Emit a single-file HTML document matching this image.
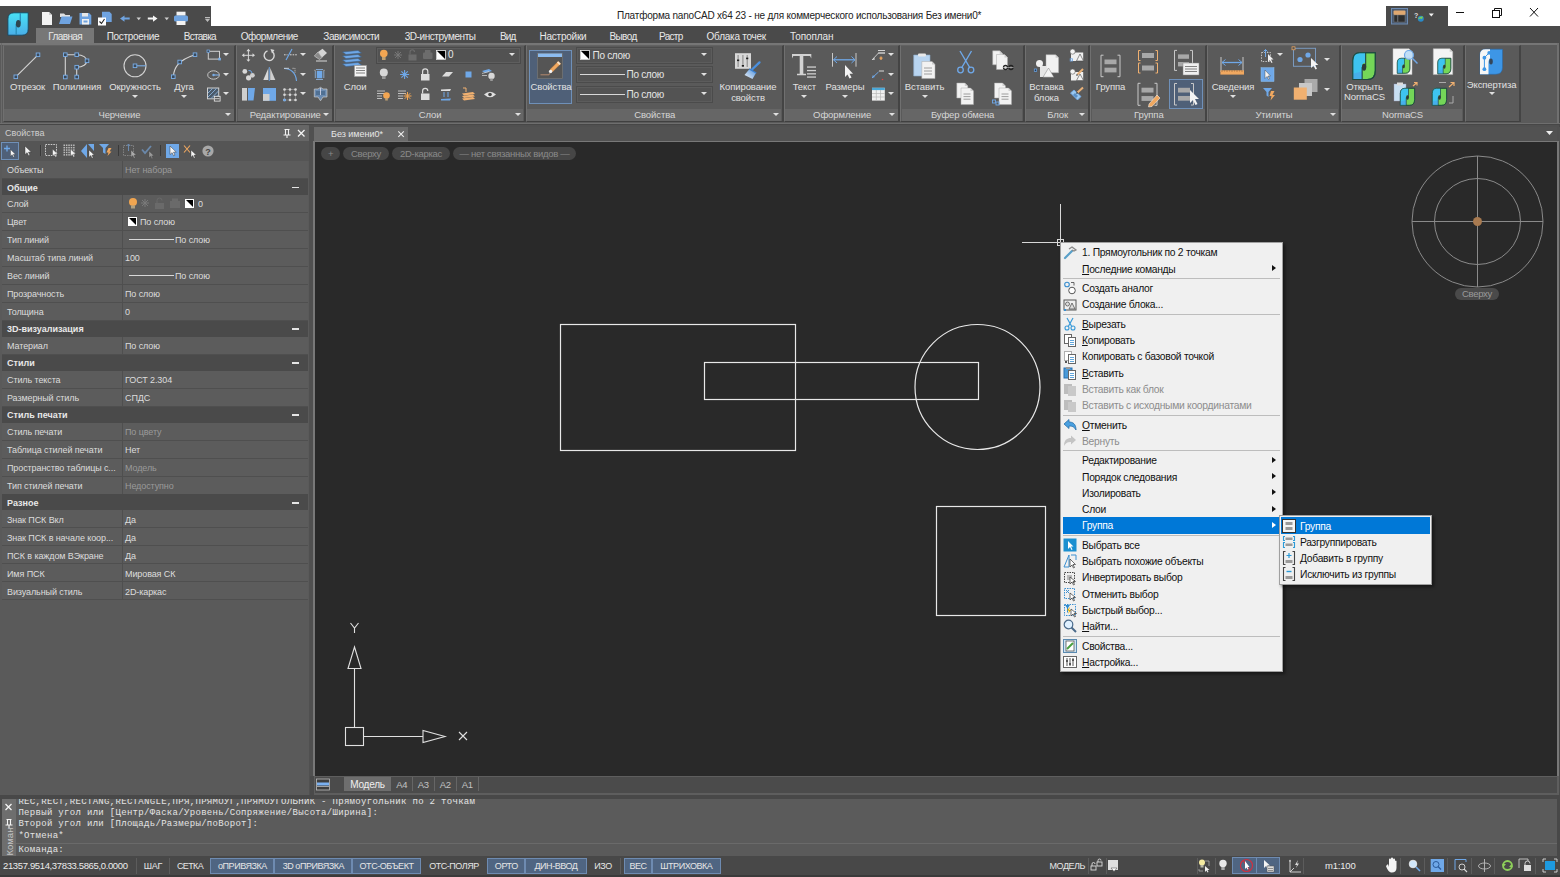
<!DOCTYPE html>
<html><head><meta charset="utf-8">
<style>
*{margin:0;padding:0;box-sizing:border-box}
html,body{width:1560px;height:877px;overflow:hidden;background:#474747;font-family:"Liberation Sans",sans-serif;color:#e6e6e6}
.a,div.a{position:absolute}
.t{position:absolute;white-space:nowrap}
svg{position:absolute;overflow:visible}
/* title */
#title{left:0;top:0;width:1560px;height:26px;background:#fff}
#tabbar{left:0;top:26px;width:1560px;height:17px;background:#4a4a4a}
.tab{position:absolute;top:26.5px;height:17px;font-size:10px;letter-spacing:-0.15px;color:#e8e8e8;line-height:17px;padding-top:1px}
/* ribbon */
#ribbon{left:0;top:43px;width:1560px;height:81px;background:#4c4c4c;border-top:1px solid #6a6a6a;border-bottom:1px solid #6a6a6a}
.pnl{position:absolute;top:44px;height:78px;background:#575757;border:1px solid #3d3d3d;box-shadow:inset 1px 1px 0 #656565}
.pt{position:absolute;left:1px;right:1px;bottom:1px;height:12px;background:#606060;font-size:9.5px;letter-spacing:-0.1px;text-align:center;line-height:12px;color:#d0d0d0}
.pt i{position:absolute;right:3px;top:4px;width:0;height:0;border-left:3.5px solid transparent;border-right:3.5px solid transparent;border-top:4px solid #e0e0e0}
.rl{position:absolute;font-size:9.5px;letter-spacing:-0.1px;color:#e2e2e2;white-space:nowrap;text-align:center;line-height:11px}
.dd{position:absolute;width:0;height:0;border-left:3px solid transparent;border-right:3px solid transparent;border-top:3.5px solid #e0e0e0}
/* props */
#props{left:0;top:125px;width:310px;height:670px;background:#5a5a5a}
.row{position:absolute;left:2px;width:306px;height:18px;background:#5c5c5c;border-bottom:1px solid #4f4f4f;font-size:9px;letter-spacing:-0.1px;color:#dcdcdc;line-height:17px}
.row .k{position:absolute;left:5px;top:1.3px}
.row .v{position:absolute;left:123px;top:1.3px}
.row .sep{position:absolute;left:120px;top:0;width:1px;height:18px;background:#4f4f4f}
.row.dis .v{color:#9a9a9a}
.hdr{position:absolute;left:2px;width:306px;height:16px;background:#4a4a4a;font-size:9px;font-weight:bold;color:#e8e8e8;line-height:16px}
.hdr .k{position:absolute;left:5px;top:0.5px}
.hdr .m{position:absolute;right:8.7px;top:7.6px;width:7.5px;height:1.5px;background:#e4e4e4}
/* viewport */
#vp{left:315px;top:142px;width:1242px;height:634px;background:#292929}
.pill{position:absolute;top:147px;height:12.5px;border-radius:6.5px;background:#464646;color:#8a8a8a;font-size:9.5px;line-height:13px;text-align:center;letter-spacing:-0.3px}
/* menu */
.menu{position:absolute;background:#f0f0f0;border:1px solid #a0a0a0;box-shadow:2px 2px 3px rgba(0,0,0,.45)}
.mi{position:absolute;left:0;height:16px;font-size:10.3px;letter-spacing:-0.27px;color:#111;line-height:18.5px;white-space:nowrap}
.mi.dis{color:#8d8d8d}
.msep{position:absolute;left:2px;right:2px;height:1px;background:#bdbdbd}
.arr{position:absolute;width:0;height:0;border-top:3.5px solid transparent;border-bottom:3.5px solid transparent;border-left:4px solid #111}
/* cmd */
#cmd{left:0;top:797px;width:1560px;height:60px;background:#555}
.cl{position:absolute;left:18px;font-family:"Liberation Mono",monospace;font-size:9px;letter-spacing:.31px;color:#e4e4e4;white-space:pre;line-height:11px}
/* status */
#status{left:0;top:857px;width:1560px;height:20px;background:#474747}
.sb{position:absolute;top:857.6px;height:16px;font-size:9px;color:#e6e6e6;line-height:16px;text-align:center;white-space:nowrap}
.sb.on{background:#4f6582;border:1px solid #6e8bb1;line-height:14px}

</style></head><body>
<!-- TITLE BAR -->
<div id="title" class="a"></div>
<div class="a" style="left:0;top:6px;width:34px;height:37px;background:#4a4a4a"></div>
<div class="a" style="left:34px;top:6px;width:177px;height:20px;background:#4a4a4a"></div>
<div class="a" style="left:1386px;top:6px;width:62px;height:20px;background:#4a4a4a"></div>
<div class="t" style="left:617px;top:9px;font-size:10px;letter-spacing:-0.2px;color:#222;line-height:14px">Платформа nanoCAD x64 23 - не для коммерческого использования Без имени0*</div>
<div id="tabbar" class="a"></div>
<div class="a" style="left:36px;top:28px;width:58px;height:15px;background:#777"></div>

<!-- RIBBON -->
<div id="ribbon" class="a"></div>

<!-- PROPERTIES -->
<div id="props" class="a"></div>
<div class="a" style="left:0;top:125px;width:310px;height:16px;background:#666;border-top-right-radius:3px"></div>
<div class="t" style="left:5px;top:128px;font-size:9px;color:#cfcfcf;line-height:11px">Свойства</div>
<div class="a" style="left:0;top:141px;width:310px;height:20px;background:#555"></div>

<!-- DOC TABS / VIEWPORT -->
<div class="a" style="left:309px;top:125px;width:1251px;height:17px;background:#505050"></div>
<div class="a" style="left:314px;top:127px;width:1243px;height:14px;background:#525252"></div>
<div class="a" style="left:314px;top:127px;width:94px;height:14px;background:#6b6b6b"></div>
<div class="t" style="left:331px;top:128px;font-size:9px;color:#e6e6e6;line-height:12px">Без имени0*</div>
<div class="a" style="left:309px;top:141px;width:4px;height:656px;background:#505050"></div><div class="a" style="left:313px;top:141px;width:1246px;height:637px;background:#787878"></div>
<div id="vp" class="a"></div>

<!-- LAYOUT TABS -->
<div id="laytabs" class="a" style="left:313px;top:777px;width:1247px;height:16px;background:#4c4c4c"></div>

<!-- COMMAND -->
<div id="cmd" class="a"></div>

<!-- STATUS -->
<div id="status" class="a"></div>

<svg width="40" height="45" style="left:0;top:0" viewBox="0 0 40 45"><defs><linearGradient id="lg" x1="0" y1="0" x2="0" y2="1"><stop offset="0" stop-color="#48e2f6"/><stop offset="1" stop-color="#4aaee8"/></linearGradient></defs><path d="M14 12.8 H28.2 V29 Q28.2 35.2 22 35.2 H7.9 V19 Q7.9 12.8 14 12.8Z" fill="url(#lg)" stroke="#17465e" stroke-width="0.9"/><path d="M20.3 13 V23.5 M16.2 24 V35" stroke="#2a8fba" stroke-width="1.3"/><ellipse cx="18.3" cy="23.7" rx="2.4" ry="3.8" fill="#2e4650"/></svg>
<svg width="220" height="30" style="left:0;top:0" viewBox="0 0 220 30"><path d="M42 12 H49 L52 15 V25 H42Z" fill="#f2f2f2"/><path d="M49 12 V15 H52" fill="#ccc"/><path d="M60 13.5 H64 L65.5 15 H70 V17 H60Z" fill="#e0e0e0"/><path d="M59 24 L61.5 16.5 H72.5 L70 24Z" fill="#6fa3e0"/><path d="M79.5 13 H89 L91.3 15.3 V24.5 H79.5Z" fill="#6fa3e0"/><rect x="82" y="13" width="6" height="3.5" fill="#e8e8e8"/><rect x="82" y="19" width="7" height="5.5" fill="#f0f0f0"/><rect x="83.5" y="20.5" width="4" height="2" fill="#6fa3e0"/><path d="M102 11.7 H109.5 L111.7 14 V22 H102Z" fill="#6fa3e0"/><rect x="98" y="17.5" width="8" height="8" fill="#fff"/><path d="M99.5 21.5 L101.5 23.5 L104.5 19" stroke="#222" fill="none" stroke-width="1.1"/><path d="M120 18.6 L124.5 15.5 V17.6 H129.7 V19.6 H124.5 V21.7Z" fill="#6fa3e0"/><path d="M136.5 17.5 h4.5 l-2.25 2.7z" fill="#cfcfcf"/><path d="M157.5 18.6 L153 15.5 V17.6 H147.8 V19.6 H153 V21.7Z" fill="#f6f6f6"/><path d="M164.5 17.5 h4.5 l-2.25 2.7z" fill="#cfcfcf"/><rect x="176.5" y="11.7" width="9" height="4" fill="#f2f2f2"/><rect x="174" y="15.5" width="14" height="6" rx="1.5" fill="#6fa3e0"/><rect x="176.5" y="21" width="9" height="4" fill="#f2f2f2"/><path d="M205 17 h5 v1.2 h-5z M205 19 h5 l-2.5 3z" fill="#bbb"/></svg>
<svg width="1560" height="30" style="left:0;top:0"><rect x="1391.5" y="8.5" width="16" height="15.5" fill="#4a5a70" stroke="#6d8ab0"/><rect x="1393.5" y="10.5" width="12" height="4.5" rx="1" fill="#e0a870"/><rect x="1394" y="15" width="3.5" height="7" fill="#2e2e2e" stroke="#777" stroke-width=".5"/><rect x="1398" y="15" width="7" height="7" fill="#2e2e2e" stroke="#777" stroke-width=".5"/><text x="1414" y="17.5" font-size="7" font-weight="bold" fill="#dcdcdc" font-family="Liberation Sans">?</text><circle cx="1420.8" cy="18.7" r="3" fill="#2a8ac8"/><path d="M1418.5 18 Q1420 16 1423 16.5 L1422 19 Q1420 18 1418.5 19.5Z" fill="#7ad050"/><path d="M1428.8 13.5 h5 l-2.5 3z" fill="#f4f4f4"/></svg>
<svg width="100" height="20" style="left:1450px;top:4px" viewBox="0 0 100 20"><g stroke="#111" stroke-width="1" fill="none"><line x1="6" y1="8.5" x2="14" y2="8.5"/><rect x="42.5" y="6.5" width="7" height="7"/><path d="M44.5 6.5 V4.5 H51.5 V11.5 H49.5"/><path d="M80 4 L88 12.5 M88 4 L80 12.5"/></g></svg>
<div class="tab" style="left:48.3px;letter-spacing:-0.62px">Главная</div>
<div class="tab" style="left:106.7px;letter-spacing:-0.31px">Построение</div>
<div class="tab" style="left:183.7px;letter-spacing:-0.7px">Вставка</div>
<div class="tab" style="left:240.8px;letter-spacing:-0.5px">Оформление</div>
<div class="tab" style="left:323.3px;letter-spacing:-0.43px">Зависимости</div>
<div class="tab" style="left:404.7px;letter-spacing:-0.43px">3D-инструменты</div>
<div class="tab" style="left:500px;letter-spacing:-0.9px">Вид</div>
<div class="tab" style="left:539.5px;letter-spacing:-0.23px">Настройки</div>
<div class="tab" style="left:609.4px;letter-spacing:-0.59px">Вывод</div>
<div class="tab" style="left:659px;letter-spacing:-0.69px">Растр</div>
<div class="tab" style="left:706.6px;letter-spacing:-0.25px">Облака точек</div>
<div class="tab" style="left:790px;letter-spacing:-0.1px">Топоплан</div>
<div class="a" style="left:0;top:43px;width:1560px;height:1.5px;background:#767676"></div>
<div class="a" style="left:0;top:44.5px;width:1560px;height:79px;background:#5a5a5a"></div>
<div class="a" style="left:1px;top:43px;width:1px;height:81px;background:#6a6a6a"></div>
<div class="a" style="left:1557px;top:43px;width:1.5px;height:81px;background:#707070"></div>
<div class="a" style="left:1558.5px;top:43px;width:1.5px;height:84px;background:#474747"></div>
<div class="a" style="left:0;top:123px;width:1560px;height:1.3px;background:#6e6e6e"></div>
<div class="a" style="left:2.5px;top:44.5px;width:233.8px;height:77.6px;background:#5a5a5a;border-left:1.4px solid #707070;border-top:1px solid #626262;border-right:2.3px solid #444;border-bottom:1.3px solid #404040"></div>
<div class="a" style="left:3.9px;top:108.8px;width:230.10000000000002px;height:12px;background:#666"></div>
<div class="rl" style="left:2.5px;top:108.6px;width:233.8px;color:#d6d6d6">Черчение</div>
<div class="dd" style="left:225.3px;top:112.85px;border-top-color:#e0e0e0"></div>
<div class="a" style="left:236.3px;top:44.5px;width:98.0px;height:77.6px;background:#5a5a5a;border-left:1.4px solid #707070;border-top:1px solid #626262;border-right:2.3px solid #444;border-bottom:1.3px solid #404040"></div>
<div class="a" style="left:237.70000000000002px;top:108.8px;width:94.3px;height:12px;background:#666"></div>
<div class="rl" style="left:236.3px;top:108.6px;width:98.0px;color:#d6d6d6">Редактирование</div>
<div class="dd" style="left:323.3px;top:112.85px;border-top-color:#e0e0e0"></div>
<div class="a" style="left:334.3px;top:44.5px;width:191.39999999999992px;height:77.6px;background:#5a5a5a;border-left:1.4px solid #707070;border-top:1px solid #626262;border-right:2.3px solid #444;border-bottom:1.3px solid #404040"></div>
<div class="a" style="left:335.7px;top:108.8px;width:187.69999999999993px;height:12px;background:#666"></div>
<div class="rl" style="left:334.3px;top:108.6px;width:191.39999999999992px;color:#d6d6d6">Слои</div>
<div class="dd" style="left:514.6999999999999px;top:112.85px;border-top-color:#e0e0e0"></div>
<div class="a" style="left:525.6999999999999px;top:44.5px;width:258.1px;height:77.6px;background:#5a5a5a;border-left:1.4px solid #707070;border-top:1px solid #626262;border-right:2.3px solid #444;border-bottom:1.3px solid #404040"></div>
<div class="a" style="left:527.0999999999999px;top:108.8px;width:254.40000000000003px;height:12px;background:#666"></div>
<div class="rl" style="left:525.6999999999999px;top:108.6px;width:258.1px;color:#d6d6d6">Свойства</div>
<div class="dd" style="left:772.8px;top:112.85px;border-top-color:#e0e0e0"></div>
<div class="a" style="left:783.8px;top:44.5px;width:116.60000000000002px;height:77.6px;background:#5a5a5a;border-left:1.4px solid #707070;border-top:1px solid #626262;border-right:2.3px solid #444;border-bottom:1.3px solid #404040"></div>
<div class="a" style="left:785.1999999999999px;top:108.8px;width:112.90000000000002px;height:12px;background:#666"></div>
<div class="rl" style="left:783.8px;top:108.6px;width:116.60000000000002px;color:#d6d6d6">Оформление</div>
<div class="dd" style="left:889.4px;top:112.85px;border-top-color:#e0e0e0"></div>
<div class="a" style="left:900.4px;top:44.5px;width:124.39999999999998px;height:77.6px;background:#5a5a5a;border-left:1.4px solid #707070;border-top:1px solid #626262;border-right:2.3px solid #444;border-bottom:1.3px solid #404040"></div>
<div class="a" style="left:901.8px;top:108.8px;width:120.69999999999997px;height:12px;background:#666"></div>
<div class="rl" style="left:900.4px;top:108.6px;width:124.39999999999998px;color:#d6d6d6">Буфер обмена</div>
<div class="a" style="left:1024.8px;top:44.5px;width:65.59999999999991px;height:77.6px;background:#5a5a5a;border-left:1.4px solid #707070;border-top:1px solid #626262;border-right:2.3px solid #444;border-bottom:1.3px solid #404040"></div>
<div class="a" style="left:1026.2px;top:108.8px;width:61.899999999999906px;height:12px;background:#666"></div>
<div class="rl" style="left:1024.8px;top:108.6px;width:65.59999999999991px;color:#d6d6d6">Блок</div>
<div class="dd" style="left:1079.3999999999999px;top:112.85px;border-top-color:#e0e0e0"></div>
<div class="a" style="left:1090.3999999999999px;top:44.5px;width:116.90000000000009px;height:77.6px;background:#5a5a5a;border-left:1.4px solid #707070;border-top:1px solid #626262;border-right:2.3px solid #444;border-bottom:1.3px solid #404040"></div>
<div class="a" style="left:1091.8px;top:108.8px;width:113.20000000000009px;height:12px;background:#666"></div>
<div class="rl" style="left:1090.3999999999999px;top:108.6px;width:116.90000000000009px;color:#d6d6d6">Группа</div>
<div class="a" style="left:1207.3px;top:44.5px;width:133.29999999999995px;height:77.6px;background:#5a5a5a;border-left:1.4px solid #707070;border-top:1px solid #626262;border-right:2.3px solid #444;border-bottom:1.3px solid #404040"></div>
<div class="a" style="left:1208.7px;top:108.8px;width:129.59999999999997px;height:12px;background:#666"></div>
<div class="rl" style="left:1207.3px;top:108.6px;width:133.29999999999995px;color:#d6d6d6">Утилиты</div>
<div class="dd" style="left:1329.6px;top:112.85px;border-top-color:#e0e0e0"></div>
<div class="a" style="left:1340.6px;top:44.5px;width:124.0px;height:77.6px;background:#5a5a5a;border-left:1.4px solid #707070;border-top:1px solid #626262;border-right:2.3px solid #444;border-bottom:1.3px solid #404040"></div>
<div class="a" style="left:1342.0px;top:108.8px;width:120.3px;height:12px;background:#666"></div>
<div class="rl" style="left:1340.6px;top:108.6px;width:124.0px;color:#d6d6d6">NormaCS</div>
<div class="a" style="left:1464.6px;top:44.5px;width:56.200000000000045px;height:77.6px;background:#5a5a5a;border-left:1.4px solid #707070;border-top:1px solid #626262;border-right:2.3px solid #444;border-bottom:1.3px solid #404040"></div>
<div class="rl" style="left:-12.5px;top:80.7px;width:80px">Отрезок</div>
<div class="rl" style="left:37.0px;top:80.7px;width:80px">Полилиния</div>
<div class="rl" style="left:95.0px;top:80.7px;width:80px">Окружность</div>
<div class="rl" style="left:144.0px;top:80.7px;width:80px">Дуга</div>
<div class="dd" style="left:132px;top:95.25px;border-top-color:#e0e0e0"></div>
<div class="dd" style="left:181px;top:95.25px;border-top-color:#e0e0e0"></div>
<div class="dd" style="left:223.2px;top:53.25px;border-top-color:#e0e0e0"></div>
<div class="dd" style="left:223.2px;top:73.25px;border-top-color:#e0e0e0"></div>
<div class="dd" style="left:223.2px;top:92.25px;border-top-color:#e0e0e0"></div>
<svg width="1560" height="130" style="left:0;top:0"><g stroke="#d4d4d4" stroke-width="1.1" fill="none"><line x1="15.8" y1="76.8" x2="38" y2="54.8"/><path d="M65.3 77 V54.7 H76.7 C90 54.7 90 67.2 76.7 67.2 V77"/><circle cx="135" cy="65.8" r="11"/><path d="M173.3 76.7 C174 68 178 60 195 54.7"/></g><line x1="135" y1="65.8" x2="146" y2="65.8" stroke="#7aaee8" stroke-width="1.1"/><rect x="14.0" y="75.0" width="3.6" height="3.6" fill="#3a4a5c" stroke="#7aaee8" stroke-width="0.9"/><rect x="36.2" y="53.0" width="3.6" height="3.6" fill="#3a4a5c" stroke="#7aaee8" stroke-width="0.9"/><rect x="63.5" y="52.900000000000006" width="3.6" height="3.6" fill="#3a4a5c" stroke="#7aaee8" stroke-width="0.9"/><rect x="74.9" y="52.900000000000006" width="3.6" height="3.6" fill="#3a4a5c" stroke="#7aaee8" stroke-width="0.9"/><rect x="85.2" y="59.0" width="3.6" height="3.6" fill="#3a4a5c" stroke="#7aaee8" stroke-width="0.9"/><rect x="74.9" y="65.4" width="3.6" height="3.6" fill="#3a4a5c" stroke="#7aaee8" stroke-width="0.9"/><rect x="63.5" y="75.2" width="3.6" height="3.6" fill="#3a4a5c" stroke="#7aaee8" stroke-width="0.9"/><rect x="74.9" y="75.2" width="3.6" height="3.6" fill="#3a4a5c" stroke="#7aaee8" stroke-width="0.9"/><rect x="133.2" y="64.0" width="3.6" height="3.6" fill="#3a4a5c" stroke="#7aaee8" stroke-width="0.9"/><rect x="171.5" y="74.9" width="3.6" height="3.6" fill="#3a4a5c" stroke="#7aaee8" stroke-width="0.9"/><rect x="177.89999999999998" y="60.2" width="3.6" height="3.6" fill="#3a4a5c" stroke="#7aaee8" stroke-width="0.9"/><rect x="193.2" y="52.900000000000006" width="3.6" height="3.6" fill="#3a4a5c" stroke="#7aaee8" stroke-width="0.9"/><rect x="208.3" y="51.3" width="11.2" height="7.8" fill="none" stroke="#d0d0d0" stroke-width="1"/><rect x="207" y="50" width="2.6" height="2.6" fill="#3a4a5c" stroke="#7aaee8" stroke-width=".7"/><rect x="218.3" y="57.8" width="2.6" height="2.6" fill="#7aaee8"/><ellipse cx="213.5" cy="75" rx="5.8" ry="4.2" fill="none" stroke="#cfcfcf" stroke-width=".9"/><path d="M213.5 75 H219" stroke="#7aaee8" stroke-width="1.1"/><circle cx="213.5" cy="75" r="1.2" fill="#7aaee8"/><rect x="207.5" y="88" width="11.2" height="10.8" fill="#4a5a6a" stroke="#cfcfcf" stroke-width="1"/><path d="M208 93 L212.5 88.5 M208 97 L216.5 88.5 M211 98.5 L218.5 91 M215 98.5 L218.5 95" stroke="#8ab0d8" stroke-width=".9"/><rect x="214.3" y="96.3" width="5.8" height="4.8" fill="#555" stroke="#eee" stroke-width=".8"/><path d="M215 98.7 h4.5" stroke="#eee" stroke-width=".8"/></svg>
<svg width="1560" height="130" style="left:0;top:0"><path d="M248.4 50 V60.5 M243.5 55.3 H253.3" stroke="#d8d8d8" stroke-width="1"/><path d="M246.4 51.2 L248.4 48.7 L250.4 51.2Z M246.4 59.4 L248.4 61.8 L250.4 59.4Z M244.3 53.3 L241.8 55.3 L244.3 57.3Z M252.5 53.3 L255 55.3 L252.5 57.3Z" fill="#d8d8d8"/><path d="M272.5 51.8 A5 5 0 1 1 267.5 50.8" fill="none" stroke="#d8d8d8" stroke-width="1.4"/><path d="M270.5 49 L274.5 50 L272 53.5Z" fill="#d8d8d8"/><path d="M284 54.8 H287.5 M290 54.8 H297" stroke="#d8d8d8" stroke-width="1" stroke-dasharray="1.6 1"/><path d="M286 60 L292 49" stroke="#6fa8e8" stroke-width="1.2"/><path d="M318 52 L322.5 48.7 L327 53 L322 57.5Z" fill="#d4d4d4"/><path d="M318 52 L322 57.5 L319.5 59.5 L314.3 56Z" fill="#8a8a8a" stroke="#d4d4d4" stroke-width=".6"/><path d="M316 61 H327" stroke="#d8d8d8" stroke-width="1"/><circle cx="244.8" cy="71.4" r="2.4" fill="#d8d8d8"/><circle cx="248.6" cy="77.8" r="2.6" fill="#d8d8d8"/><circle cx="252.4" cy="75.3" r="2.4" fill="#cfcfcf"/><path d="M248.5 70.5 Q251.5 70 252 73" stroke="#6fa8e8" fill="none" stroke-width="1"/><path d="M268.4 68 L263.3 80 H268.4Z" fill="#d8d8d8"/><path d="M270.2 68 L275.3 80 H270.2Z" fill="#cfcfcf"/><path d="M269.3 67 V81" stroke="#6fa8e8" stroke-width=".9"/><path d="M284 68.5 C291 68.5 296 73 296.5 81" fill="none" stroke="#6fa8e8" stroke-width="1.1"/><path d="M284 68.3 H289" stroke="#ddd" stroke-width=".8"/><path d="M292.5 68.3 H295 V73" fill="none" stroke="#d8d8d8" stroke-width=".8" stroke-dasharray="1.2 1"/><rect x="316.8" y="70.8" width="5.5" height="7.5" fill="#6fa8e8"/><path d="M316 69.5 H323 M316 79.5 H323 M315.3 71 V78 M323.8 71 V78" stroke="#8cb0d8" stroke-width=".9"/><path d="M315 69.8 V70.8 M324 69.8 V70.8" stroke="#ccc"/><path d="M242 88 H247 V100.6 H242Z" fill="#cfcfcf"/><path d="M248 88 H255 L253.5 100.6 H248Z" fill="#6fa8e8"/><rect x="263" y="88" width="13" height="12.8" fill="#6fa8e8"/><rect x="263" y="94" width="6.5" height="6.8" fill="#cfcfcf"/><g fill="#d8d8d8"><circle cx="284.5" cy="89.5" r="1.3"/><circle cx="284.5" cy="94.75" r="1.3"/><circle cx="284.5" cy="100.0" r="1.3"/><circle cx="290.0" cy="89.5" r="1.3"/><circle cx="290.0" cy="94.75" r="1.3"/><circle cx="290.0" cy="100.0" r="1.3"/><circle cx="295.5" cy="89.5" r="1.3"/><circle cx="295.5" cy="94.75" r="1.3"/><circle cx="295.5" cy="100.0" r="1.3"/></g><path d="M284.5 89.5 H295.5 M284.5 94.75 H295.5 M284.5 100 H295.5 M284.5 89.5 V100 M290 89.5 V100 M295.5 89.5 V100" stroke="#d8d8d8" stroke-width=".6" stroke-dasharray="1 1"/><rect x="283.3" y="98.8" width="2.4" height="2.4" fill="#6fa8e8"/><path d="M318 89 L320.5 87.3 L323 89 H327 V97 H323 L320.5 100.8 L318 97 H314.3 V89Z" fill="#6a8ab0" stroke="#ccc" stroke-width=".7"/><path d="M316 92 H325 M316 94 H325" stroke="#2a4a6a" stroke-width=".8"/><path d="M320.5 88 V95" stroke="#dde" stroke-width=".8"/></svg>
<div class="dd" style="left:300px;top:53.25px;border-top-color:#e0e0e0"></div>
<div class="dd" style="left:300px;top:73.25px;border-top-color:#e0e0e0"></div>
<div class="dd" style="left:300px;top:92.25px;border-top-color:#e0e0e0"></div>
<svg width="1560" height="130" style="left:0;top:0"><g fill="#6fa8e8" stroke="#3c5f88" stroke-width=".6"><path d="M342.5 52 L358 50.5 L361.5 53 L346 54.5Z"/><path d="M342.5 56 L358 54.5 L361.5 57 L346 58.5Z"/><path d="M342.5 60 L358 58.5 L361.5 61 L346 62.5Z"/><path d="M342.5 64 L358 62.5 L361.5 65 L346 66.5Z"/></g><rect x="354.5" y="65.5" width="12" height="11" fill="#f4f4f4" stroke="#999" stroke-width=".6"/><path d="M356 68 H365 M356 70.5 H365 M356 73 H365" stroke="#666" stroke-width=".8"/></svg>
<div class="rl" style="left:315.0px;top:80.7px;width:80px">Слои</div>
<div class="a" style="left:376px;top:46.7px;width:145px;height:17px;background:#525252;border:1px solid #4a4a4a;box-shadow:inset 0 0 0 1px #5e5e5e"></div>
<svg width="1560" height="130" style="left:0;top:0"><circle cx="383.8" cy="53.5" r="3.8" fill="#f3a652"/><rect x="382" y="57" width="3.6" height="3" fill="#c0a070"/><g stroke="#7a7a7a" stroke-width=".9"><path d="M398 51 V59 M394 55 H402 M395 52 L401 58 M401 52 L395 58"/></g><rect x="408.5" y="54.5" width="8" height="6" fill="#6c6c6c"/><path d="M410 54.5 V52 A2.2 2.2 0 0 1 414.5 52" stroke="#6c6c6c" fill="none" stroke-width="1.1"/><rect x="423" y="52.5" width="9.5" height="6.5" rx="1" fill="#6c6c6c"/><rect x="425" y="50" width="5.5" height="3" fill="#6c6c6c"/><rect x="436.5" y="50.5" width="9" height="9" fill="#000" stroke="#f0f0f0" stroke-width=".8"/><path d="M437 51 L445 59 H437Z" fill="#fff"/></svg>
<div class="t" style="left:448px;top:49px;font-size:10px;color:#e6e6e6;line-height:12px">0</div>
<div class="dd" style="left:508.7px;top:53.25px;border-top-color:#e0e0e0"></div>
<svg width="1560" height="130" style="left:0;top:0"><circle cx="383.8" cy="72.5" r="4" fill="#d8d8d8"/><rect x="382" y="76" width="3.6" height="3" fill="#999"/><g stroke="#6fa8e8" stroke-width="1.1"><path d="M404.6 70 V79 M400.1 74.5 H409.1 M401.4 71.3 L407.8 77.7 M407.8 71.3 L401.4 77.7"/></g><rect x="421" y="74" width="8.5" height="6.5" fill="#dcdcdc"/><path d="M422.6 74 V71.5 A2.6 2.6 0 0 1 427.8 71.5 V74" stroke="#dcdcdc" fill="none" stroke-width="1.2"/><path d="M442 76.5 L446 72 H453 L449 76.5Z" fill="#dcdcdc"/><rect x="465.5" y="71.5" width="6" height="6" fill="#6fa8e8"/><path d="M482 71 L489 69 L492 71 L485 73Z" fill="#6fa8e8"/><path d="M482 73.5 L489 71.5 L490 72.5 M482 75.5 H487" stroke="#ccc" stroke-width=".8" fill="none"/><circle cx="491.5" cy="76" r="3.2" fill="#d8d8d8"/><rect x="490.2" y="78.5" width="2.6" height="2.5" fill="#999"/><path d="M377 91 H385 M377 93.5 H385 M377 96 H382 M377 98.5 H382" stroke="#ccc" stroke-width=".9"/><circle cx="386.5" cy="95.5" r="3.3" fill="#f3a652"/><rect x="385.2" y="98" width="2.6" height="2.5" fill="#c0a070"/><path d="M398 91 H406 M398 93.5 H406 M398 96 H403 M398 98.5 H403" stroke="#ccc" stroke-width=".9"/><g stroke="#f3a652" stroke-width="1"><path d="M407.5 92 V100 M403.5 96 H411.5 M404.7 93.2 L410.3 98.8 M410.3 93.2 L404.7 98.8"/></g><rect x="421" y="93.5" width="8.5" height="6.5" fill="#dcdcdc"/><path d="M422.6 93.5 V91 A2.6 2.6 0 0 1 427.8 91" stroke="#dcdcdc" fill="none" stroke-width="1.2"/><path d="M441 89.5 L451 89 L450 91 H441Z" fill="#e0e0e0"/><path d="M441 99 L451 98.5 L450 100.5 H441Z" fill="#6fa8e8"/><path d="M444 92 V97 M448 92 V97" stroke="#6fa8e8" stroke-width="1"/><path d="M462 98.5 L473 97 L475 99 L464 100.5Z" fill="#f0b070"/><path d="M462 96 L473 94.5 L475 96.5 L464 98Z" fill="#f0b070"/><path d="M462 93.5 L473 92 L475 94 L464 95.5Z" fill="#f0b070"/><path d="M463 88 H466 V92" stroke="#f0b070" fill="none" stroke-width="1"/><path d="M484 94.5 Q490 89 496 94.5 Q490 100 484 94.5Z" fill="#e0e0e0"/><circle cx="490" cy="94.5" r="1.8" fill="#444"/></svg>
<div class="a" style="left:529px;top:50px;width:43px;height:54px;background:#4f6078;border:1px solid #6f90b8"></div>
<svg width="1560" height="130" style="left:0;top:0"><rect x="537.5" y="53.5" width="25" height="25" fill="#555" stroke="#777" stroke-width=".7"/><rect x="538" y="53.5" width="24" height="3.5" fill="#8cbcf0"/><path d="M540.5 74.8 H549 L550.5 72.5" stroke="#c09070" stroke-width=".9" fill="none"/><path d="M552.5 72.1 L549.9 69.5 L558.2 61.2 L560.8 63.8Z" fill="#f0a860" stroke="#8a5a30" stroke-width=".4"/><path d="M559.5 65.1 L556.9 62.5 L558.2 61.2 L560.8 63.8Z" fill="#f6e0c8"/><circle cx="550.6" cy="71.4" r="1.7" fill="#f4f4f4"/></svg>
<div class="rl" style="left:526.0px;top:80.7px;width:50px">Свойства</div>
<div class="a" style="left:575.6px;top:46.5px;width:137.5px;height:17px;background:#535353;border:1px solid #4b4b4b;box-shadow:inset 0 0 0 1px #5c5c5c"></div>
<div class="dd" style="left:701px;top:53.25px;border-top-color:#e0e0e0"></div>
<div class="a" style="left:575.6px;top:66px;width:137.5px;height:17px;background:#535353;border:1px solid #4b4b4b;box-shadow:inset 0 0 0 1px #5c5c5c"></div>
<div class="dd" style="left:701px;top:72.75px;border-top-color:#e0e0e0"></div>
<div class="a" style="left:575.6px;top:85.5px;width:137.5px;height:17px;background:#535353;border:1px solid #4b4b4b;box-shadow:inset 0 0 0 1px #5c5c5c"></div>
<div class="dd" style="left:701px;top:92.25px;border-top-color:#e0e0e0"></div>
<svg width="1560" height="130" style="left:0;top:0"><rect x="580.5" y="50.5" width="9" height="9" fill="#000" stroke="#f0f0f0" stroke-width=".8"/><path d="M581 51 L589 59 H581Z" fill="#fff"/></svg>
<div class="t" style="left:592.5px;top:50px;font-size:10px;letter-spacing:-0.3px;color:#e6e6e6;line-height:12px">По слою</div>
<div class="a" style="left:580px;top:74px;width:45px;height:1px;background:#d8d8d8"></div>
<div class="t" style="left:626.5px;top:69.2px;font-size:10px;letter-spacing:-0.3px;color:#e6e6e6;line-height:12px">По слою</div>
<div class="a" style="left:580px;top:93.5px;width:45px;height:1px;background:#d8d8d8"></div>
<div class="t" style="left:626.5px;top:88.7px;font-size:10px;letter-spacing:-0.3px;color:#e6e6e6;line-height:12px">По слою</div>
<svg width="1560" height="130" style="left:0;top:0"><defs><linearGradient id="brg" x1="0" y1="1" x2="1" y2="0"><stop offset="0" stop-color="#f4f4f4"/><stop offset="1" stop-color="#4a90e0"/></linearGradient></defs><rect x="735" y="53.2" width="16" height="15.6" fill="#d8d8d8"/><path d="M738.1 55 V67 M742.9 55 V67 M747.2 55 V67" stroke="#8a8a8a" stroke-width="1.1"/><rect x="737" y="59.5" width="2.2" height="1.6" fill="#222"/><rect x="741.8" y="65" width="2.2" height="1.6" fill="#222"/><rect x="746.1" y="57.6" width="2.2" height="1.6" fill="#222"/><path d="M759.5 62.4 L752 69.5" stroke="#4a90e0" stroke-width="2.3" stroke-linecap="round"/><path d="M749.5 69 L756 73 L752.5 79 L744.5 75Z" fill="url(#brg)"/><path d="M749.2 68.8 L756.3 73" stroke="#3a80d0" stroke-width="1.4"/></svg>
<div class="rl" style="left:708.0px;top:80.7px;width:80px">Копирование</div>
<div class="rl" style="left:708.0px;top:91.7px;width:80px">свойств</div>
<svg width="1560" height="130" style="left:0;top:0"><path d="M792 54 H811.3 V58.5 L810 56 H803.3 V73.8 H806 V75.2 H797 V73.8 H799.7 V56 H793.3 L792 58.5Z" fill="#d2d2d2"/><rect x="807" y="66.4" width="9" height="1.3" fill="#cfcfcf"/><rect x="807" y="69.9" width="9" height="1.3" fill="#cfcfcf"/><rect x="807" y="73.2" width="9" height="1.3" fill="#cfcfcf"/><rect x="807" y="76.4" width="9" height="1.3" fill="#cfcfcf"/><path d="M832.5 53 V66.7 M856 53 V66.7" stroke="#c8c8c8" stroke-width="1"/><path d="M833.5 59.8 H855" stroke="#6fa8e8" stroke-width="1.3"/><path d="M837 56.5 L833.5 59.8 L837 63 M851.5 56.5 L855 59.8 L851.5 63" stroke="#6fa8e8" fill="none" stroke-width="1"/><path d="M845 65 V77 L847.5 74.5 L849.5 78.6 L851.5 77.6 L849.5 73.8 L853 73.8Z" fill="#f4f4f4"/><path d="M872 60 L878.5 53 H885" stroke="#d0d0d0" fill="none" stroke-width=".9"/><path d="M878 50.5 H885 M878 53 H885" stroke="#d0d0d0" stroke-width="1.1"/><path d="M872 60 L874 57.5 L875 59.5Z" fill="#ddd"/><path d="M881 56.5 V60 M879.5 58.2 H882.5" stroke="#f0a860" stroke-width="1.3"/><path d="M872 78 L878.5 72" stroke="#6fa8e8" stroke-width="1"/><path d="M872 78 L872.8 75 L875 77Z" fill="#6fa8e8"/><path d="M879 71 H884" stroke="#d0d0d0" stroke-width="1.1"/><circle cx="882.5" cy="79.5" r=".8" fill="#e04040"/><rect x="872" y="87.8" width="12.8" height="12.8" fill="#f0f0f0"/><rect x="872" y="87.8" width="12.8" height="2.3" fill="#4aa8d8"/><path d="M872 93.5 H884.8 M872 97 H884.8 M876.3 90 V100.6 M880.5 90 V100.6" stroke="#b8b8b8" stroke-width=".7"/><path d="M913.7 55 H930 V76 H913.7Z" fill="#b8d4f0" stroke="#8aa8c8" stroke-width=".6"/><rect x="918" y="53.5" width="8" height="3" rx="1" fill="#e8e8e8"/><path d="M921.8 61.5 H932.0 L935.0 64.5 V78.6 H921.8Z" fill="#f2f2f2" stroke="#aaa" stroke-width=".5"/><path d="M932.0 61.5 V64.5 H935.0" fill="#ccc"/><path d="M924 68 H932" stroke="#888" stroke-width=".8"/><path d="M924 71 H932" stroke="#888" stroke-width=".8"/><path d="M924 74 H932" stroke="#888" stroke-width=".8"/><path d="M960 51 L970 68 M971.5 51 L961.5 68" stroke="#6fa8e8" stroke-width="1.4"/><circle cx="960.5" cy="70" r="2.8" fill="none" stroke="#6fa8e8" stroke-width="1.3"/><circle cx="971" cy="70" r="2.8" fill="none" stroke="#6fa8e8" stroke-width="1.3"/><path d="M992.7 50.8 H999.7 L1002.7 53.8 V64.8 H992.7Z" fill="#f2f2f2" stroke="#aaa" stroke-width=".5"/><path d="M999.7 50.8 V53.8 H1002.7" fill="#ccc"/><path d="M996.5 54.5 H1004.5 L1007.5 57.5 V69.5 H996.5Z" fill="#f2f2f2" stroke="#aaa" stroke-width=".5"/><path d="M1004.5 54.5 V57.5 H1007.5" fill="#ccc"/><circle cx="1005.5" cy="67.5" r="2" fill="none" stroke="#222" stroke-width="1.3"/><circle cx="1011" cy="67.5" r="2" fill="none" stroke="#222" stroke-width="1.3"/><path d="M1003 67.5 H1013.5" stroke="#ccc" stroke-width=".6"/><path d="M956.8 83 H964.8 L967.8 86 V98 H956.8Z" fill="#f2f2f2" stroke="#aaa" stroke-width=".5"/><path d="M964.8 83 V86 H967.8" fill="#ccc"/><path d="M961 88 H970.5 L973.5 91 V104.6 H961Z" fill="#f2f2f2" stroke="#aaa" stroke-width=".5"/><path d="M970.5 88 V91 H973.5" fill="#ccc"/><path d="M963.5 94.0 H970.5" stroke="#888" stroke-width=".8"/><path d="M963.5 96.6 H970.5" stroke="#888" stroke-width=".8"/><path d="M963.5 99.2 H970.5" stroke="#888" stroke-width=".8"/><path d="M994.5 83 H1002.5 L1005.5 86 V98 H994.5Z" fill="#f2f2f2" stroke="#aaa" stroke-width=".5"/><path d="M1002.5 83 V86 H1005.5" fill="#ccc"/><path d="M999 88 H1008.5 L1011.5 91 V104.6 H999Z" fill="#f2f2f2" stroke="#aaa" stroke-width=".5"/><path d="M1008.5 88 V91 H1011.5" fill="#ccc"/><path d="M1001.5 94.0 H1008.5" stroke="#888" stroke-width=".8"/><path d="M1001.5 96.6 H1008.5" stroke="#888" stroke-width=".8"/><path d="M1001.5 99.2 H1008.5" stroke="#888" stroke-width=".8"/><rect x="992.5" y="100" width="3" height="3" fill="none" stroke="#6fa8e8" stroke-width=".9"/><rect x="996" y="102" width="3" height="3" fill="none" stroke="#6fa8e8" stroke-width=".9"/><path d="M1046 54.7 H1055.6 L1058.6 57.7 V72.7 H1046Z" fill="#f2f2f2" stroke="#aaa" stroke-width=".5"/><path d="M1055.6 54.7 V57.7 H1058.6" fill="#ccc"/><path d="M1040 66 H1047 V77 H1040Z" fill="#e6e6e6"/><circle cx="1039.5" cy="63.5" r="3.5" fill="#f0f0f0"/><path d="M1043 77.2 L1048.5 68 L1054 77.2Z" fill="#f4f4f4" stroke="#666" stroke-width=".4"/><rect x="1034.3" y="69" width="2.4" height="2.4" fill="#1e3a5a" stroke="#6fa8e8" stroke-width=".7"/><rect x="1071" y="52.5" width="12.2" height="8.5" fill="#f0f0f0"/><circle cx="1072.6" cy="51.6" r="2.6" fill="#f4f4f4" stroke="#5a5a5a" stroke-width=".6"/><path d="M1076.5 61 L1080 54 L1083.5 61Z" fill="#f4f4f4" stroke="#444" stroke-width=".6"/><rect x="1070.2" y="58.8" width="2.2" height="2.2" fill="none" stroke="#6fa8e8" stroke-width=".8"/><rect x="1071" y="72" width="12.2" height="8.5" fill="#f0f0f0"/><circle cx="1072.6" cy="71.6" r="2.6" fill="#f4f4f4" stroke="#5a5a5a" stroke-width=".6"/><path d="M1076.5 80.5 L1080 74 L1083.5 80.5Z" fill="#f4f4f4" stroke="#444" stroke-width=".6"/><path d="M1077.5 74.5 L1083 69" stroke="#e8b078" stroke-width="2"/><path d="M1077.5 74.5 L1076.5 75.5" stroke="#333" stroke-width="1.2"/><path d="M1070.5 93 L1074 90 L1081 96.5 L1077.5 100Z" fill="#9ac8f0" stroke="#6fa8e8" stroke-width=".8"/><path d="M1073 95 L1075 93 L1078 96 L1076 98Z" fill="#5a90c8"/><path d="M1077.5 92.5 L1083 87.5" stroke="#e8b078" stroke-width="2"/><path d="M1077.5 92.5 L1076.5 93.5" stroke="#333" stroke-width="1.2"/><path d="M1103.5 55.2 H1101 V76.7 H1103.5 M1117.5 55.2 H1120 V76.7 H1117.5" fill="none" stroke="#c8c8c8" stroke-width="1"/><rect x="1104.5" y="59.5" width="12" height="4.73" fill="#a8a8a8"/><rect x="1104.5" y="67.67" width="12" height="4.73" fill="#a8a8a8"/><path d="M1140.5 50.5 H1138.5 V60.5 H1140.5 M1155.5 50.5 H1157.5 V60.5 H1155.5 M1140.5 63 H1138.5 V73 H1140.5 M1155.5 63 H1157.5 V73 H1155.5" fill="none" stroke="#f0b070" stroke-width="1"/><rect x="1142" y="53" width="12" height="5" fill="#a8a8a8"/><rect x="1142" y="65.5" width="12" height="5" fill="#a8a8a8"/><path d="M1177.0 50.4 H1174.5 V70.4 H1177.0 M1190.0 50.4 H1192.5 V70.4 H1190.0" fill="none" stroke="#c8c8c8" stroke-width="1"/><rect x="1178.0" y="54.4" width="11" height="4.4" fill="#a8a8a8"/><rect x="1178.0" y="62.0" width="11" height="4.4" fill="#a8a8a8"/><rect x="1183" y="63" width="16" height="12" fill="#f0f0f0" stroke="#888" stroke-width=".5"/><path d="M1185 66.5 H1197 M1185 69 H1197 M1185 71.5 H1197" stroke="#666" stroke-width=".8"/><path d="M1140.5 83.3 H1138 V105.3 H1140.5 M1154.5 83.3 H1157 V105.3 H1154.5" fill="none" stroke="#c8c8c8" stroke-width="1"/><rect x="1141.5" y="87.7" width="12" height="4.84" fill="#a8a8a8"/><rect x="1141.5" y="96.06" width="12" height="4.84" fill="#a8a8a8"/><path d="M1149 104 L1157 95 L1160 98 L1152 106.5 L1148.5 107Z" fill="#f0a860" stroke="#fff" stroke-width=".5"/></svg>
<div class="a" style="left:1168.8px;top:79px;width:34px;height:30px;background:#4f6078;border:1px solid #6f90b8"></div>
<svg width="1560" height="130" style="left:0;top:0"><path d="M1177.0 83.5 H1174.5 V105.0 H1177.0 M1191.0 83.5 H1193.5 V105.0 H1191.0" fill="none" stroke="#c8c8c8" stroke-width="1"/><rect x="1178.0" y="87.8" width="12" height="4.73" fill="#a8a8a8"/><rect x="1178.0" y="95.97" width="12" height="4.73" fill="#a8a8a8"/><path d="M1190 90 V103 L1193 100 L1195.5 105 L1197.5 104 L1195 99 L1199 99Z" fill="#f4f4f4"/><path d="M1221 57 V72 M1243 57 V72" stroke="#c8c8c8" stroke-width="1"/><path d="M1222 62.5 H1242" stroke="#6fa8e8" stroke-width="1.3"/><path d="M1225.5 59.5 L1222 62.5 L1225.5 65.5 M1238.5 59.5 L1242 62.5 L1238.5 65.5" fill="none" stroke="#6fa8e8"/><rect x="1220.4" y="70.3" width="23.6" height="4.3" fill="#f0a860"/><path d="M1222 70.3 V72 M1224.5 70.3 V71.5 M1227 70.3 V72 M1229.5 70.3 V71.5 M1232 70.3 V72 M1234.5 70.3 V71.5 M1237 70.3 V72 M1239.5 70.3 V71.5 M1242 70.3 V72" stroke="#8a5a30" stroke-width=".5"/><rect x="1261.5" y="52.5" width="9" height="9" fill="none" stroke="#ccc" stroke-width=".9" stroke-dasharray="1.5 1.2"/><path d="M1265.5 57 V49.5 M1263.5 51.5 L1265.5 49.5 L1267.5 51.5" stroke="#6fa8e8" fill="none" stroke-width="1"/><path d="M1268 54 V62 L1270 60 L1271.5 63 L1272.5 62.5 L1271 59.5 L1273.5 59.5Z" fill="#f0f0f0"/><rect x="1261" y="67.7" width="13" height="13.8" fill="#6fa8e8" stroke="#8cc0f0" stroke-width=".5"/><path d="M1265 70 V78.5 L1267 76.5 L1268.5 79.5 L1269.5 79 L1268 76 L1270.5 76Z" fill="#f4f4f4" stroke="#333" stroke-width=".4"/><path d="M1263 88 H1272 L1268.5 92 V97 L1266.5 95.5 V92Z" fill="#6fa8e8"/><path d="M1271 91 L1274.5 91 L1272.5 95 L1275 95 L1270.5 100.5 L1271.5 96 L1269.5 96Z" fill="#f0a860"/><rect x="1293.5" y="48.3" width="22" height="18" fill="none" stroke="#7a9ac0" stroke-width="1"/><rect x="1292" y="46.8" width="3" height="3" fill="#555" stroke="#f0a860" stroke-width=".7"/><circle cx="1300" cy="59.5" r="2.6" fill="#6fa8e8"/><circle cx="1308" cy="55" r="2.6" fill="#6fa8e8"/><path d="M1311 58 V68 L1313.5 65.8 L1315.5 69.5 L1317 68.7 L1315 65 L1318.3 65Z" fill="#f4f4f4"/><rect x="1304.5" y="79" width="13" height="13" fill="#aaa"/><rect x="1299" y="83" width="13" height="13" fill="#c8c8c8"/><rect x="1293.8" y="87.5" width="13" height="12.2" fill="#f0b070"/><g transform="translate(1352.3,52.3) scale(1.07)"><path d="M7 0.5 H21.5 V17 Q21.5 25.5 14 25.5 H0.5 V8 Q0.5 0.5 7 0.5Z" fill="#74d658" stroke="#1e4a40" stroke-width="1"/><path d="M7 0.5 H12.3 V9.8 Q9 10 9 14 V25.5 H0.5 V8 Q0.5 0.5 7 0.5Z" fill="#3ec4f0"/><path d="M0.5 20 V25.5 H9 V18Z" fill="#4aa8e8" opacity=".7"/><path d="M12.5 0.5 V14 M9.2 14 V25.5" stroke="#1d4048" stroke-width="1"/><ellipse cx="11" cy="14" rx="2" ry="3.2" fill="#2e3a3a"/><path d="M0.5 8 Q0.5 0.5 7 0.5 H21.5 V17 Q21.5 25.5 14 25.5 H0.5Z" fill="none" stroke="#1e4a40" stroke-width="1"/></g><path d="M1393 48.7 H1409 L1412 51.7 V74.6 H1393Z" fill="#f4f4f4" stroke="#bbb" stroke-width=".5"/><path d="M1409 48.7 V51.7 H1412" fill="#ccc"/><g transform="translate(1397,58) scale(0.6)"><path d="M7 0.5 H21.5 V17 Q21.5 25.5 14 25.5 H0.5 V8 Q0.5 0.5 7 0.5Z" fill="#74d658" stroke="#1e4a40" stroke-width="1"/><path d="M7 0.5 H12.3 V9.8 Q9 10 9 14 V25.5 H0.5 V8 Q0.5 0.5 7 0.5Z" fill="#3ec4f0"/><path d="M0.5 20 V25.5 H9 V18Z" fill="#4aa8e8" opacity=".7"/><path d="M12.5 0.5 V14 M9.2 14 V25.5" stroke="#1d4048" stroke-width="1"/><ellipse cx="11" cy="14" rx="2" ry="3.2" fill="#2e3a3a"/><path d="M0.5 8 Q0.5 0.5 7 0.5 H21.5 V17 Q21.5 25.5 14 25.5 H0.5Z" fill="none" stroke="#1e4a40" stroke-width="1"/></g><circle cx="1409" cy="55" r="4.5" fill="#bcdcf6" fill-opacity=".9" stroke="#6fa8e8" stroke-width="1.2"/><path d="M1412.3 58.3 L1417.5 63.5" stroke="#6fa8e8" stroke-width="1.5"/><path d="M1433.3 48.7 H1449.7 L1452.7 51.7 V74.6 H1433.3Z" fill="#f4f4f4" stroke="#bbb" stroke-width=".5"/><path d="M1449.7 48.7 V51.7 H1452.7" fill="#ccc"/><g transform="translate(1437.5,58) scale(0.62)"><path d="M7 0.5 H21.5 V17 Q21.5 25.5 14 25.5 H0.5 V8 Q0.5 0.5 7 0.5Z" fill="#74d658" stroke="#1e4a40" stroke-width="1"/><path d="M7 0.5 H12.3 V9.8 Q9 10 9 14 V25.5 H0.5 V8 Q0.5 0.5 7 0.5Z" fill="#3ec4f0"/><path d="M0.5 20 V25.5 H9 V18Z" fill="#4aa8e8" opacity=".7"/><path d="M12.5 0.5 V14 M9.2 14 V25.5" stroke="#1d4048" stroke-width="1"/><ellipse cx="11" cy="14" rx="2" ry="3.2" fill="#2e3a3a"/><path d="M0.5 8 Q0.5 0.5 7 0.5 H21.5 V17 Q21.5 25.5 14 25.5 H0.5Z" fill="none" stroke="#1e4a40" stroke-width="1"/></g><rect x="1394" y="84" width="12" height="17" fill="#c8dff2" stroke="#99b" stroke-width=".4"/><rect x="1397" y="82.5" width="6" height="3" fill="#ddd"/><g transform="translate(1400,88) scale(0.68)"><path d="M7 0.5 H21.5 V17 Q21.5 25.5 14 25.5 H0.5 V8 Q0.5 0.5 7 0.5Z" fill="#74d658" stroke="#1e4a40" stroke-width="1"/><path d="M7 0.5 H12.3 V9.8 Q9 10 9 14 V25.5 H0.5 V8 Q0.5 0.5 7 0.5Z" fill="#3ec4f0"/><path d="M0.5 20 V25.5 H9 V18Z" fill="#4aa8e8" opacity=".7"/><path d="M12.5 0.5 V14 M9.2 14 V25.5" stroke="#1d4048" stroke-width="1"/><ellipse cx="11" cy="14" rx="2" ry="3.2" fill="#2e3a3a"/><path d="M0.5 8 Q0.5 0.5 7 0.5 H21.5 V17 Q21.5 25.5 14 25.5 H0.5Z" fill="none" stroke="#1e4a40" stroke-width="1"/></g><path d="M1413 86 L1417 82.5 M1414 82.5 H1417 V85.5" stroke="#f0b070" stroke-width="1.2" fill="none"/><path d="M1439 82.5 H1446 M1453 96 V103 H1449" stroke="#aaa" stroke-width="1" fill="none"/><g transform="translate(1432,88) scale(0.68)"><path d="M7 0.5 H21.5 V17 Q21.5 25.5 14 25.5 H0.5 V8 Q0.5 0.5 7 0.5Z" fill="#74d658" stroke="#1e4a40" stroke-width="1"/><path d="M7 0.5 H12.3 V9.8 Q9 10 9 14 V25.5 H0.5 V8 Q0.5 0.5 7 0.5Z" fill="#3ec4f0"/><path d="M0.5 20 V25.5 H9 V18Z" fill="#4aa8e8" opacity=".7"/><path d="M12.5 0.5 V14 M9.2 14 V25.5" stroke="#1d4048" stroke-width="1"/><ellipse cx="11" cy="14" rx="2" ry="3.2" fill="#2e3a3a"/><path d="M0.5 8 Q0.5 0.5 7 0.5 H21.5 V17 Q21.5 25.5 14 25.5 H0.5Z" fill="none" stroke="#1e4a40" stroke-width="1"/></g><path d="M1449 87 L1454 82.5 M1450.5 82.5 H1454 V86" stroke="#f0b070" stroke-width="1.2" fill="none"/><path d="M1485.5 49.2 H1502.5 V67.5 Q1502.5 74.3 1495.5 74.3 H1480 V54.7 Q1480 49.2 1485.5 49.2Z" fill="#3d96e6" stroke="#2a6aa8" stroke-width=".6"/><path d="M1485.5 49.2 H1490 V58 Q1488.5 60 1488.5 62 V74.3 H1480 V54.7 Q1480 49.2 1485.5 49.2Z" fill="#f6f6f6"/><path d="M1489.1 52.9 L1484.4 57.7 V69.2" stroke="#3d96e6" stroke-width="1" fill="none"/><circle cx="1489.1" cy="52.9" r="1.8" fill="#3d96e6"/><circle cx="1484.4" cy="57.7" r="1.9" fill="#3d96e6"/><circle cx="1484.4" cy="69.2" r="1.9" fill="#3d96e6"/><ellipse cx="1491" cy="61.5" rx="1.8" ry="3" fill="#34465a"/></svg>
<div class="rl" style="left:764.4px;top:80.7px;width:80px">Текст</div>
<div class="dd" style="left:801.4px;top:95.25px;border-top-color:#e0e0e0"></div>
<div class="rl" style="left:805.0px;top:80.7px;width:80px">Размеры</div>
<div class="dd" style="left:842px;top:95.25px;border-top-color:#e0e0e0"></div>
<div class="dd" style="left:888px;top:53.25px;border-top-color:#e0e0e0"></div>
<div class="dd" style="left:888px;top:72.75px;border-top-color:#e0e0e0"></div>
<div class="dd" style="left:888px;top:92.25px;border-top-color:#e0e0e0"></div>
<div class="rl" style="left:884.5px;top:80.7px;width:80px">Вставить</div>
<div class="dd" style="left:921.5px;top:95.25px;border-top-color:#e0e0e0"></div>
<div class="rl" style="left:1006.5px;top:80.7px;width:80px">Вставка</div>
<div class="rl" style="left:1006.5px;top:91.7px;width:80px">блока</div>
<div class="rl" style="left:1070.5px;top:80.7px;width:80px">Группа</div>
<div class="rl" style="left:1193.0px;top:80.7px;width:80px">Сведения</div>
<div class="dd" style="left:1230px;top:95.25px;border-top-color:#e0e0e0"></div>
<div class="dd" style="left:1277px;top:53.25px;border-top-color:#e0e0e0"></div>
<div class="dd" style="left:1324.2px;top:58.25px;border-top-color:#e0e0e0"></div>
<div class="dd" style="left:1324.2px;top:87.55px;border-top-color:#e0e0e0"></div>
<div class="rl" style="left:1324.5px;top:80.7px;width:80px">Открыть</div>
<div class="rl" style="left:1324.5px;top:91.2px;width:80px">NormaCS</div>
<div class="rl" style="left:1461.6px;top:78.5px;width:60px">Экспертиза</div>
<div class="dd" style="left:1488.6px;top:92.05px;border-top-color:#e0e0e0"></div>
<div class="row dis" style="top:161.20px"><span class="k">Объекты</span><span class="sep"></span><span class="v">Нет набора</span></div>
<div class="hdr" style="top:179.15px"><span class="k">Общие</span><span class="m"></span></div>
<div class="row " style="top:195.15px"><span class="k">Слой</span><span class="sep"></span><svg width="80" height="14" style="left:123px;top:2px"><circle cx="8" cy="5" r="4" fill="#f0a550"/><rect x="6" y="8.5" width="4" height="3" fill="#b0a080"/><g stroke="#7a7a7a" stroke-width="1"><line x1="20" y1="2" x2="20" y2="10"/><line x1="16" y1="6" x2="24" y2="6"/><line x1="17" y1="3" x2="23" y2="9"/><line x1="23" y1="3" x2="17" y2="9"/></g><rect x="30" y="6" width="9" height="6" fill="#6a6a6a"/><path d="M32 6 V3.5 a2.5 2.5 0 0 1 5 0" stroke="#6a6a6a" fill="none"/><rect x="45" y="4" width="10" height="7" fill="#6a6a6a"/><rect x="47" y="1.5" width="6" height="3" fill="#6a6a6a"/></svg><span class="a" style="left:183px;top:4px;width:9px;height:9px;background:#000;border:1px solid #fff;overflow:hidden"><svg width="9" height="9" style="left:0;top:0"><polygon points="0,0 9,9 0,9" fill="#fff" transform="translate(-1,-1)"/></svg></span><span class="v" style="left:196px">0</span></div>
<div class="row " style="top:213.10px"><span class="k">Цвет</span><span class="sep"></span><span class="a" style="left:126px;top:4px;width:9px;height:9px;background:#000;border:1px solid #fff;overflow:hidden"><svg width="9" height="9" style="left:0;top:0"><polygon points="0,0 9,9 0,9" fill="#fff" transform="translate(-1,-1)"/></svg></span><span class="v" style="left:138px">По слою</span></div>
<div class="row " style="top:231.05px"><span class="k">Тип линий</span><span class="sep"></span><span class="a" style="left:127px;top:8px;width:45px;height:1px;background:#d8d8d8"></span><span class="v" style="left:173px">По слою</span></div>
<div class="row " style="top:249.00px"><span class="k">Масштаб типа линий</span><span class="sep"></span><span class="v">100</span></div>
<div class="row " style="top:266.95px"><span class="k">Вес линий</span><span class="sep"></span><span class="a" style="left:127px;top:8px;width:45px;height:1px;background:#d8d8d8"></span><span class="v" style="left:173px">По слою</span></div>
<div class="row " style="top:284.90px"><span class="k">Прозрачность</span><span class="sep"></span><span class="v">По слою</span></div>
<div class="row " style="top:302.85px"><span class="k">Толщина</span><span class="sep"></span><span class="v">0</span></div>
<div class="hdr" style="top:320.80px"><span class="k">3D-визуализация</span><span class="m"></span></div>
<div class="row " style="top:336.80px"><span class="k">Материал</span><span class="sep"></span><span class="v">По слою</span></div>
<div class="hdr" style="top:354.75px"><span class="k">Стили</span><span class="m"></span></div>
<div class="row " style="top:370.75px"><span class="k">Стиль текста</span><span class="sep"></span><span class="v">ГОСТ 2.304</span></div>
<div class="row " style="top:388.70px"><span class="k">Размерный стиль</span><span class="sep"></span><span class="v">СПДС</span></div>
<div class="hdr" style="top:406.65px"><span class="k">Стиль печати</span><span class="m"></span></div>
<div class="row dis" style="top:422.65px"><span class="k">Стиль печати</span><span class="sep"></span><span class="v">По цвету</span></div>
<div class="row " style="top:440.60px"><span class="k">Таблица стилей печати</span><span class="sep"></span><span class="v">Нет</span></div>
<div class="row dis" style="top:458.55px"><span class="k">Пространство таблицы с...</span><span class="sep"></span><span class="v">Модель</span></div>
<div class="row dis" style="top:476.50px"><span class="k">Тип стилей печати</span><span class="sep"></span><span class="v">Недоступно</span></div>
<div class="hdr" style="top:494.45px"><span class="k">Разное</span><span class="m"></span></div>
<div class="row " style="top:510.45px"><span class="k">Знак ПСК Вкл</span><span class="sep"></span><span class="v">Да</span></div>
<div class="row " style="top:528.40px"><span class="k">Знак ПСК в начале коор...</span><span class="sep"></span><span class="v">Да</span></div>
<div class="row " style="top:546.35px"><span class="k">ПСК в каждом ВЭкране</span><span class="sep"></span><span class="v">Да</span></div>
<div class="row " style="top:564.30px"><span class="k">Имя ПСК</span><span class="sep"></span><span class="v">Мировая СК</span></div>
<div class="row " style="top:582.25px"><span class="k">Визуальный стиль</span><span class="sep"></span><span class="v">2D-каркас</span></div>
<div class="a" style="left:1.4px;top:142px;width:17.6px;height:17.6px;background:#4f6078;border:1px solid #6f90b8"></div>
<div class="a" style="left:165.5px;top:143.5px;width:13.5px;height:14px;background:#6fa8e8"></div>
<svg width="320" height="170" style="left:0;top:0"><path d="M7 145.5 V151.5 M4 148.5 H10" stroke="#6fa8e8" stroke-width="1.3"/><path transform="translate(10.5,149.5) scale(0.75)" d="M0 0 V9 L2.2 7 L3.8 10.3 L5.2 9.6 L3.7 6.5 L6.6 6.4Z" fill="#f4f4f4" stroke="#333" stroke-width=".5"/><path transform="translate(25,146) scale(0.95)" d="M0 0 V9 L2.2 7 L3.8 10.3 L5.2 9.6 L3.7 6.5 L6.6 6.4Z" fill="#f4f4f4" stroke="#333" stroke-width=".5"/><path d="M40.5 145 V156" stroke="#3a3a3a" stroke-width="1"/><path d="M41.5 145 V156" stroke="#666" stroke-width=".6"/><rect x="45.5" y="144.5" width="11" height="11" fill="none" stroke="#ccc" stroke-width="1" stroke-dasharray="1.6 1"/><path transform="translate(52.5,149) scale(0.8)" d="M0 0 V9 L2.2 7 L3.8 10.3 L5.2 9.6 L3.7 6.5 L6.6 6.4Z" fill="#f4f4f4" stroke="#333" stroke-width=".5"/><g fill="#bbb"><rect x="63.5" y="144.5" width="1.5" height="1.5"/><rect x="63.5" y="146.9" width="1.5" height="1.5"/><rect x="63.5" y="149.3" width="1.5" height="1.5"/><rect x="63.5" y="151.7" width="1.5" height="1.5"/><rect x="63.5" y="154.1" width="1.5" height="1.5"/><rect x="65.9" y="144.5" width="1.5" height="1.5"/><rect x="65.9" y="146.9" width="1.5" height="1.5"/><rect x="65.9" y="149.3" width="1.5" height="1.5"/><rect x="65.9" y="151.7" width="1.5" height="1.5"/><rect x="65.9" y="154.1" width="1.5" height="1.5"/><rect x="68.3" y="144.5" width="1.5" height="1.5"/><rect x="68.3" y="146.9" width="1.5" height="1.5"/><rect x="68.3" y="149.3" width="1.5" height="1.5"/><rect x="68.3" y="151.7" width="1.5" height="1.5"/><rect x="68.3" y="154.1" width="1.5" height="1.5"/><rect x="70.7" y="144.5" width="1.5" height="1.5"/><rect x="70.7" y="146.9" width="1.5" height="1.5"/><rect x="70.7" y="149.3" width="1.5" height="1.5"/><rect x="70.7" y="151.7" width="1.5" height="1.5"/><rect x="70.7" y="154.1" width="1.5" height="1.5"/><rect x="73.1" y="144.5" width="1.5" height="1.5"/><rect x="73.1" y="146.9" width="1.5" height="1.5"/><rect x="73.1" y="149.3" width="1.5" height="1.5"/><rect x="73.1" y="151.7" width="1.5" height="1.5"/><rect x="73.1" y="154.1" width="1.5" height="1.5"/></g><path transform="translate(70.5,149) scale(0.8)" d="M0 0 V9 L2.2 7 L3.8 10.3 L5.2 9.6 L3.7 6.5 L6.6 6.4Z" fill="#f4f4f4" stroke="#333" stroke-width=".5"/><path d="M81 151 L87 144 V158Z" fill="#6fa8e8"/><path d="M88 144 H94 V151Z" fill="#6fa8e8"/><path transform="translate(89,150) scale(0.8)" d="M0 0 V9 L2.2 7 L3.8 10.3 L5.2 9.6 L3.7 6.5 L6.6 6.4Z" fill="#f4f4f4" stroke="#333" stroke-width=".5"/><path d="M99 144 H109 L105.5 148 V154 L103 152.5 V148Z" fill="#6fa8e8"/><path d="M108.5 148 L111.5 148 L109.5 151.5 L111.5 151.5 L107.5 156 L108.5 152.5 L106.5 152.5Z" fill="#f0a860"/><path d="M118.5 145 V156" stroke="#3a3a3a" stroke-width="1"/><rect x="123.5" y="145.5" width="10" height="10" fill="none" stroke="#888" stroke-width=".9" stroke-dasharray="1.5 1"/><path d="M128.5 151 V144 M126.8 145.8 L128.5 144 L130.2 145.8" stroke="#6a8ab0" stroke-width="1" fill="none"/><path transform="translate(131,150) scale(0.8)" d="M0 0 V9 L2.2 7 L3.8 10.3 L5.2 9.6 L3.7 6.5 L6.6 6.4Z" fill="#aaa" stroke="#444" stroke-width=".5"/><path d="M142 149.5 L145 153 L151 146" stroke="#6a88aa" stroke-width="1.8" fill="none"/><path transform="translate(149,151) scale(0.75)" d="M0 0 V9 L2.2 7 L3.8 10.3 L5.2 9.6 L3.7 6.5 L6.6 6.4Z" fill="#9a9a9a" stroke="#444" stroke-width=".5"/><path d="M160.5 145 V156" stroke="#3a3a3a" stroke-width="1"/><path transform="translate(170,146) scale(0.95)" d="M0 0 V9 L2.2 7 L3.8 10.3 L5.2 9.6 L3.7 6.5 L6.6 6.4Z" fill="#f4f4f4" stroke="#333" stroke-width=".5"/><path d="M184 145.5 L190 152.5 M190 145.5 L184 152.5" stroke="#f0a860" stroke-width="1.1"/><path transform="translate(191,150) scale(0.8)" d="M0 0 V9 L2.2 7 L3.8 10.3 L5.2 9.6 L3.7 6.5 L6.6 6.4Z" fill="#f4f4f4" stroke="#333" stroke-width=".5"/><circle cx="208" cy="151" r="5.6" fill="#a8a8a8"/><text x="205.2" y="154.5" font-family="Liberation Sans" font-weight="bold" font-size="9" fill="#444">?</text><path d="M284.5 129.5 H289.5 M285.5 129.5 V135 H288.5 V129.5 M283.5 135 H290.5 M287 135 V138" stroke="#f0f0f0" stroke-width="1.1" fill="none"/><path d="M298 130 L304.5 136.5 M304.5 130 L298 136.5" stroke="#f4f4f4" stroke-width="1.3"/></svg>
<svg width="1560" height="150" style="left:0;top:0"><path d="M398.3 131.3 L403.8 136.8 M403.8 131.3 L398.3 136.8" stroke="#eee" stroke-width="1.1"/><path d="M1546 131 h7 l-3.5 4z" fill="#eee"/></svg>
<div class="pill" style="left:321px;width:19px">+</div>
<div class="pill" style="left:343px;width:46px">Сверху</div>
<div class="pill" style="left:392px;width:58px">2D-каркас</div>
<div class="pill" style="left:453px;width:123px">— нет связанных видов —</div>
<svg width="1560" height="877" style="left:0;top:0"><g fill="none" stroke="#e8e8e8" stroke-width="1.2"><rect x="560.5" y="324.5" width="235" height="126"/><rect x="704.5" y="362.5" width="274" height="37"/><circle cx="977.5" cy="387" r="62.5"/><rect x="936.5" y="506.5" width="109" height="109"/></g><g stroke="#d8d8d8" stroke-width="1"><line x1="1060.5" y1="204" x2="1060.5" y2="242"/><line x1="1022" y1="242.5" x2="1060" y2="242.5"/><rect x="1057.5" y="239.5" width="6" height="6" fill="none"/></g><g fill="none" stroke="#8a8a8a" stroke-width="1"><circle cx="1477.5" cy="221.5" r="65.5"/><circle cx="1477.5" cy="221.5" r="43"/><line x1="1412" y1="221.5" x2="1543" y2="221.5"/><line x1="1477.5" y1="156" x2="1477.5" y2="287"/></g><circle cx="1477.5" cy="221.5" r="4.5" fill="#a87a50"/><g fill="none" stroke="#e0e0e0" stroke-width="1.1"><rect x="345.5" y="727.5" width="18" height="18"/><line x1="354.5" y1="727" x2="354.5" y2="668"/><polygon points="354.5,647 348,668.5 361,668.5"/><line x1="364" y1="736.5" x2="423" y2="736.5"/><polygon points="445,736.5 423,730.5 423,742.5"/><path d="M350.5 623 L354.5 628 L358.5 623 M354.5 628 V633"/><path d="M459 732 L467 740 M467 732 L459 740"/></g></svg>
<div class="pill" style="left:1455px;top:288px;width:44px;height:12px;line-height:12px;background:#4a4a4a;color:#9a9a9a">Сверху</div>
<div class="menu" style="left:1060px;top:242px;width:223px;height:430px"></div>
<div class="mi" style="left:1082px;top:244.4px;color:#111">1. Прямоугольник по 2 точкам</div>
<svg width="14" height="14" style="left:1063px;top:246px" viewBox="0 0 14 14"><path d="M2 12 L9 5" stroke="#5aa0c8" stroke-width="2.2" stroke-linecap="round"/><path d="M6 3 L9 1 L13 4 L11 5 L9 4" fill="none" stroke="#888" stroke-width="1.2"/></svg>
<div class="mi" style="left:1082px;top:260.6px;color:#111"><u style="text-decoration-thickness:1px;text-underline-offset:1px">П</u>оследние команды</div>
<div class="arr" style="left:1272px;top:265.1px;border-left-color:#111"></div>
<div class="msep" style="left:1063px;width:217px;top:278.2px"></div>
<div class="mi" style="left:1082px;top:280.1px;color:#111">Создать аналог</div>
<svg width="14" height="14" style="left:1063px;top:281px" viewBox="0 0 14 14"><circle cx="4" cy="3.5" r="2.3" fill="none" stroke="#3a8fd0" stroke-width="1.1"/><circle cx="9" cy="9.5" r="3.3" fill="#fff" stroke="#555" stroke-width="1"/><path d="M8 1.5 h3 v3" fill="none" stroke="#555" stroke-width="0.9"/></svg>
<div class="mi" style="left:1082px;top:296.4px;color:#111">Создание блока...</div>
<svg width="14" height="14" style="left:1063px;top:298px" viewBox="0 0 14 14"><rect x="1" y="2" width="12" height="10" fill="none" stroke="#555"/><circle cx="4.5" cy="6" r="2" fill="#ddd" stroke="#555" stroke-width=".8"/><path d="M6 11 L9 5 L12 11Z" fill="#ddd" stroke="#555" stroke-width=".8"/><rect x="1" y="11" width="2" height="2" fill="#3a8fd0"/></svg>
<div class="msep" style="left:1063px;width:217px;top:313.9px"></div>
<div class="mi" style="left:1082px;top:315.9px;color:#111"><u style="text-decoration-thickness:1px;text-underline-offset:1px">В</u>ырезать</div>
<svg width="14" height="14" style="left:1063px;top:317px" viewBox="0 0 14 14"><path d="M4 1 L9 10 M10 1 L5 10" stroke="#3a9ad8" stroke-width="1.2"/><circle cx="4" cy="11" r="2" fill="none" stroke="#3a9ad8" stroke-width="1.1"/><circle cx="10" cy="11" r="2" fill="none" stroke="#3a9ad8" stroke-width="1.1"/></svg>
<div class="mi" style="left:1082px;top:332.1px;color:#111"><u style="text-decoration-thickness:1px;text-underline-offset:1px">К</u>опировать</div>
<svg width="14" height="14" style="left:1063px;top:333px" viewBox="0 0 14 14"><rect x="1.5" y="1.5" width="7" height="9" fill="#fff" stroke="#666"/><rect x="5.5" y="4.5" width="7" height="9" fill="#fff" stroke="#666"/><path d="M7 7.5h4M7 9.5h4M7 11.5h4" stroke="#3a8fd0" stroke-width=".8"/></svg>
<div class="mi" style="left:1082px;top:348.4px;color:#111">Копировать с базовой точкой</div>
<svg width="14" height="14" style="left:1063px;top:350px" viewBox="0 0 14 14"><rect x="1.5" y="1.5" width="7" height="9" fill="#fff" stroke="#666" stroke-dasharray="1 1"/><rect x="5.5" y="4.5" width="7" height="9" fill="#fff" stroke="#666"/><path d="M7 7.5h4M7 9.5h4M7 11.5h4" stroke="#3a8fd0" stroke-width=".8"/><rect x="2" y="11" width="2" height="2" fill="#555"/></svg>
<div class="mi" style="left:1082px;top:364.6px;color:#111"><u style="text-decoration-thickness:1px;text-underline-offset:1px">В</u>ставить</div>
<svg width="14" height="14" style="left:1063px;top:366px" viewBox="0 0 14 14"><rect x="1" y="2" width="8" height="10" fill="#4a9ad8" stroke="#2a70b0"/><rect x="3" y="1" width="4" height="2" fill="#999"/><rect x="5.5" y="4.5" width="7" height="9" fill="#fff" stroke="#666"/><path d="M7 7.5h4M7 9.5h4M7 11.5h4" stroke="#3a8fd0" stroke-width=".8"/></svg>
<div class="mi" style="left:1082px;top:380.9px;color:#8d8d8d">Вставить как блок</div>
<svg width="14" height="14" style="left:1063px;top:382px" viewBox="0 0 14 14"><rect x="1" y="2" width="8" height="10" fill="#bdbdbd"/><rect x="5" y="4" width="8" height="10" fill="#c9c9c9"/></svg>
<div class="mi" style="left:1082px;top:397.1px;color:#8d8d8d">Вставить с исходными координатами</div>
<svg width="14" height="14" style="left:1063px;top:398px" viewBox="0 0 14 14"><rect x="1" y="2" width="8" height="10" fill="#bdbdbd"/><rect x="5" y="4" width="8" height="10" fill="#c9c9c9"/></svg>
<div class="msep" style="left:1063px;width:217px;top:414.7px"></div>
<div class="mi" style="left:1082px;top:416.6px;color:#111"><u style="text-decoration-thickness:1px;text-underline-offset:1px">О</u>тменить</div>
<svg width="14" height="14" style="left:1063px;top:418px" viewBox="0 0 14 14"><path d="M1 6 L6 1.5 V4 C10 4 13 6 13 12 C11 8.5 9 8 6 8 V10.5Z" fill="#4aa0e0" stroke="#2a70a8" stroke-width=".8"/></svg>
<div class="mi" style="left:1082px;top:432.9px;color:#8d8d8d">Вернуть</div>
<svg width="14" height="14" style="left:1063px;top:434px" viewBox="0 0 14 14"><path d="M13 6 L8 1.5 V4 C4 4 1 6 1 12 C3 8.5 5 8 8 8 V10.5Z" fill="#c4c4c4"/></svg>
<div class="msep" style="left:1063px;width:217px;top:450.4px"></div>
<div class="mi" style="left:1082px;top:452.4px;color:#111">Редактирование</div>
<div class="arr" style="left:1272px;top:456.9px;border-left-color:#111"></div>
<div class="mi" style="left:1082px;top:468.6px;color:#111">Порядок следования</div>
<div class="arr" style="left:1272px;top:473.1px;border-left-color:#111"></div>
<div class="mi" style="left:1082px;top:484.9px;color:#111">Изолировать</div>
<div class="arr" style="left:1272px;top:489.4px;border-left-color:#111"></div>
<div class="mi" style="left:1082px;top:501.1px;color:#111">Слои</div>
<div class="arr" style="left:1272px;top:505.6px;border-left-color:#111"></div>
<div class="a" style="left:1062.5px;top:516.7px;width:218px;height:17.2px;background:#0078d7"></div>
<div class="mi" style="left:1082px;top:517.4px;color:#fff">Группа</div>
<div class="arr" style="left:1272px;top:521.9px;border-left-color:#fff"></div>
<div class="msep" style="left:1063px;width:217px;top:534.9px"></div>
<div class="mi" style="left:1082px;top:536.9px;color:#111">Выбрать все</div>
<svg width="14" height="14" style="left:1063px;top:538px" viewBox="0 0 14 14"><rect x="0.5" y="0.5" width="13" height="13" fill="#1b8fd0"/><path d="M5 3 L5 11 L7 9 L8.5 12 L9.5 11.5 L8 8.5 L10.5 8.5Z" fill="#fff"/></svg>
<div class="mi" style="left:1082px;top:553.1px;color:#111">Выбрать похожие объекты</div>
<svg width="14" height="14" style="left:1063px;top:554px" viewBox="0 0 14 14"><path d="M1 13 L6 1 V13Z" fill="none" stroke="#3a8fd0"/><path d="M8 1 L13 1 L13 6" fill="none" stroke="#3a8fd0"/><path d="M7 5 L7 13 L9 11 L10.5 14 L11.5 13.5 L10 10.5 L12.5 10.5Z" fill="#fff" stroke="#333" stroke-width=".7"/></svg>
<div class="mi" style="left:1082px;top:569.4px;color:#111">Инвертировать выбор</div>
<svg width="14" height="14" style="left:1063px;top:571px" viewBox="0 0 14 14"><rect x="1.5" y="1.5" width="10" height="10" fill="none" stroke="#444" stroke-dasharray="1.5 1"/><rect x="4" y="4" width="5" height="5" fill="#bbb"/><path d="M7 6 L7 13 L9 11 L10.5 14 L11.5 13.5 L10 10.5 L12.5 10.5Z" fill="#fff" stroke="#333" stroke-width=".7"/></svg>
<div class="mi" style="left:1082px;top:585.6px;color:#111">Отменить выбор</div>
<svg width="14" height="14" style="left:1063px;top:587px" viewBox="0 0 14 14"><rect x="1.5" y="1.5" width="10" height="10" fill="none" stroke="#3a8fd0" stroke-dasharray="1.5 1"/><path d="M3 3 L6 6 M6 3 L3 6" stroke="#3a8fd0"/><path d="M7 6 L7 13 L9 11 L10.5 14 L11.5 13.5 L10 10.5 L12.5 10.5Z" fill="#fff" stroke="#333" stroke-width=".7"/></svg>
<div class="mi" style="left:1082px;top:601.9px;color:#111">Быстрый выбор...</div>
<svg width="14" height="14" style="left:1063px;top:603px" viewBox="0 0 14 14"><rect x="1.5" y="1.5" width="11" height="11" fill="none" stroke="#3a8fd0" stroke-dasharray="1.5 1"/><path d="M2 2 H7 L5 5 V9 L4 10 V5Z" fill="#2a8ad0"/><path d="M4 7 L7 4 L6 7 L8 7 L5 11 L6 8Z" fill="#e8b000"/><path d="M8 6 L8 13 L10 11 L11.5 14 L12.5 13.5 L11 10.5 L13.5 10.5Z" fill="#fff" stroke="#333" stroke-width=".7"/></svg>
<div class="mi" style="left:1082px;top:618.1px;color:#111"><u style="text-decoration-thickness:1px;text-underline-offset:1px">Н</u>айти...</div>
<svg width="14" height="14" style="left:1063px;top:619px" viewBox="0 0 14 14"><circle cx="5.5" cy="5.5" r="4.3" fill="#dff0ff" stroke="#4a6a8a" stroke-width="1.2"/><path d="M8.5 8.5 L13 13" stroke="#4a6a8a" stroke-width="2"/></svg>
<div class="msep" style="left:1063px;width:217px;top:635.7px"></div>
<div class="mi" style="left:1082px;top:637.6px;color:#111">Свойства...</div>
<svg width="14" height="14" style="left:1063px;top:639px" viewBox="0 0 14 14"><rect x="0.5" y="0.5" width="13" height="13" fill="#cde4f5" stroke="#5a8ab0"/><rect x="3" y="2" width="8" height="10" fill="#fff" stroke="#555" stroke-width=".8"/><path d="M4 10 L10 4" stroke="#4aa040" stroke-width="2"/></svg>
<div class="mi" style="left:1082px;top:653.9px;color:#111"><u style="text-decoration-thickness:1px;text-underline-offset:1px">Н</u>астройка...</div>
<svg width="14" height="14" style="left:1063px;top:655px" viewBox="0 0 14 14"><rect x="0.5" y="1.5" width="13" height="11" fill="#fff" stroke="#666"/><path d="M4 3v8M7 3v8M10 3v8" stroke="#555"/><rect x="3" y="5" width="2" height="2" fill="#555"/><rect x="6" y="8" width="2" height="2" fill="#555"/><rect x="9" y="4" width="2" height="2" fill="#555"/></svg>
<div class="menu" style="left:1279px;top:515px;width:153px;height:70px"></div>
<div class="a" style="left:1281px;top:517px;width:149px;height:16.5px;background:#0078d7"></div>
<div class="mi" style="left:1300px;top:517.5px;color:#fff">Группа</div>
<svg width="14" height="14" style="left:1282px;top:519px" viewBox="0 0 14 14"><rect x="0.5" y="0.5" width="13" height="13" fill="#f4f4f4" stroke="#333"/><rect x="3.5" y="3" width="7" height="3" fill="#9a9a9a"/><rect x="3.5" y="8" width="7" height="3" fill="#9a9a9a"/></svg>
<div class="mi" style="left:1300px;top:533.8px;color:#111">Разгруппировать</div>
<svg width="14" height="14" style="left:1282px;top:535px" viewBox="0 0 14 14"><path d="M3 1.5 H1.5 V5.5 H3 M11 1.5 H12.5 V5.5 H11 M3 7.5 H1.5 V12.5 H3 M11 7.5 H12.5 V12.5 H11" fill="none" stroke="#2a9ad8" stroke-width="1.1"/><rect x="3.5" y="2.5" width="7" height="2.5" fill="#9a9a9a"/><rect x="3.5" y="8.5" width="7" height="2.5" fill="#9a9a9a"/></svg>
<div class="mi" style="left:1300px;top:550.0px;color:#111">Добавить в группу</div>
<svg width="14" height="14" style="left:1282px;top:551px" viewBox="0 0 14 14"><path d="M3.5 0.5 H1.5 V13.5 H3.5 M10.5 0.5 H12.5 V13.5 H10.5" fill="none" stroke="#444" stroke-width="1.1"/><path d="M7 2 V7 M4.5 4.5 H9.5" stroke="#2a9ad8" stroke-width="1.2"/><rect x="3.5" y="9" width="7" height="3" fill="#9a9a9a"/></svg>
<div class="mi" style="left:1300px;top:566.2px;color:#111">Исключить из группы</div>
<svg width="14" height="14" style="left:1282px;top:567px" viewBox="0 0 14 14"><path d="M3.5 0.5 H1.5 V13.5 H3.5 M10.5 0.5 H12.5 V13.5 H10.5" fill="none" stroke="#444" stroke-width="1.1"/><path d="M4.5 4.5 H9.5" stroke="#2a9ad8" stroke-width="1.4"/><rect x="3.5" y="9" width="7" height="3" fill="#9a9a9a"/></svg>
<div class="a" style="left:310px;top:776px;width:1250px;height:21px;background:#4a4a4a"></div>
<div class="a" style="left:313.5px;top:776px;width:1245px;height:18.5px;background:#5e5e5e"></div>
<div class="a" style="left:314.5px;top:777.2px;width:1242.5px;height:16px;background:#4b4b4b"></div>
<svg width="20" height="16" style="left:314px;top:777px"><rect x="2.5" y="2" width="13" height="11" fill="#3e3e3e" stroke="#bbb" stroke-width=".8"/><rect x="3" y="5.5" width="12" height="3" fill="#7ab0f0"/><path d="M3 9.5 H15" stroke="#bbb" stroke-width=".8"/></svg>
<div class="a" style="left:344px;top:777.2px;width:47px;height:14.3px;background:#6e6e6e"></div>
<div class="t" style="left:344px;top:778px;width:47px;text-align:center;font-size:10px;letter-spacing:-0.2px;color:#f0f0f0;line-height:13px">Модель</div>
<div class="a" style="left:412px;top:777.2px;width:1px;height:14.3px;background:#666"></div>
<div class="t" style="left:391px;top:778px;width:21.5px;text-align:center;font-size:9.5px;letter-spacing:-0.3px;color:#c2c2c2;line-height:13.5px">A4</div>
<div class="a" style="left:433.5px;top:777.2px;width:1px;height:14.3px;background:#666"></div>
<div class="t" style="left:412.5px;top:778px;width:21.5px;text-align:center;font-size:9.5px;letter-spacing:-0.3px;color:#c2c2c2;line-height:13.5px">A3</div>
<div class="a" style="left:455.5px;top:777.2px;width:1px;height:14.3px;background:#666"></div>
<div class="t" style="left:434.5px;top:778px;width:21.5px;text-align:center;font-size:9.5px;letter-spacing:-0.3px;color:#c2c2c2;line-height:13.5px">A2</div>
<div class="a" style="left:477.5px;top:777.2px;width:1px;height:14.3px;background:#666"></div>
<div class="t" style="left:456.5px;top:778px;width:21.5px;text-align:center;font-size:9.5px;letter-spacing:-0.3px;color:#c2c2c2;line-height:13.5px">A1</div>
<div class="a" style="left:0;top:795px;width:1560px;height:62px;background:#484848"></div>
<div class="a" style="left:16px;top:799px;width:1541px;height:43.5px;background:#5b5b5b"></div>
<div class="a" style="left:16px;top:842.5px;width:1541px;height:1px;background:#6a6a6a"></div>
<div class="a" style="left:16px;top:843.5px;width:1541px;height:12px;background:#5a5a5a"></div>
<div class="a" style="left:2px;top:799px;width:13.6px;height:56.5px;background:#6e6e6e"></div>
<svg width="16" height="30" style="left:2px;top:800px"><path d="M3.5 4 L9.5 10 M9.5 4 L3.5 10" stroke="#f4f4f4" stroke-width="1.3"/><path d="M4.5 19.5 H9.5 M5.5 19.5 V25 H8.5 V19.5 M3.5 25 H10.5 M7 25 V28" stroke="#f4f4f4" stroke-width="1.1" fill="none"/></svg>
<div class="a" style="left:2px;top:828px;width:13.6px;height:27.5px;overflow:hidden"><div class="t" style="left:-21px;top:-6px;width:56px;transform:rotate(-90deg);font-size:9.5px;color:#c4c4c4;line-height:11px;text-align:left">Командная</div></div>
<div class="a" style="left:16px;top:799px;width:1541px;height:43.5px;overflow:hidden">
<div class="cl" style="left:2.4px;top:-2.2000000000000455px">REC,RECT,RECTANG,RECTANGLE,ПРЯ,ПРЯМОУГ,ПРЯМОУГОЛЬНИК - Прямоугольник по 2 точкам</div>
<div class="cl" style="left:2.4px;top:9.0px">Первый угол или [Центр/Фаска/Уровень/Сопряжение/Высота/Ширина]:</div>
<div class="cl" style="left:2.4px;top:20.299999999999955px">Второй угол или [Площадь/Размеры/поВорот]:</div>
<div class="cl" style="left:2.4px;top:31.5px">*Отмена*</div>
</div>
<div class="cl" style="left:18.4px;top:844.8px">Команда:</div>
<div class="a" style="left:0;top:856px;width:1560px;height:21px;background:#484848"></div>
<div class="a" style="left:0;top:875.3px;width:1560px;height:1.7px;background:#3a3a3a"></div>
<div class="t" style="left:3px;top:858px;font-size:9.5px;letter-spacing:-0.36px;color:#ececec;line-height:16px">21357.9514,37833.5865,0.0000</div>
<div class="a" style="left:136px;top:858px;width:1px;height:16px;background:#5c5c5c"></div>
<div class="sb" style="left:137px;width:32px;font-size:9px;letter-spacing:-0.17px">ШАГ</div>
<div class="a" style="left:169.3px;top:858px;width:1px;height:16px;background:#5c5c5c"></div>
<div class="sb" style="left:170px;width:40px;font-size:9px;letter-spacing:-0.6px">СЕТКА</div>
<div class="sb on" style="left:210.4px;width:64px;font-size:9px;letter-spacing:-0.45px">оПРИВЯЗКА</div>
<div class="sb on" style="left:274.4px;width:78px;font-size:9px;letter-spacing:-0.45px">3D оПРИВЯЗКА</div>
<div class="sb on" style="left:352.3px;width:68.5px;font-size:9px;letter-spacing:-0.45px">ОТС-ОБЪЕКТ</div>
<div class="sb" style="left:421px;width:66px;font-size:9px;letter-spacing:-0.45px">ОТС-ПОЛЯР</div>
<div class="sb on" style="left:487.3px;width:38px;font-size:9px;letter-spacing:-0.45px">ОРТО</div>
<div class="sb on" style="left:525.4px;width:61.2px;font-size:9px;letter-spacing:-0.45px">ДИН-ВВОД</div>
<div class="sb" style="left:587px;width:32px;font-size:9px;letter-spacing:-0.45px">ИЗО</div>
<div class="sb on" style="left:624px;width:28px;font-size:9px;letter-spacing:-0.45px">ВЕС</div>
<div class="sb on" style="left:651.7px;width:69.3px;font-size:9px;letter-spacing:-0.45px">ШТРИХОВКА</div>
<div class="a" style="left:620px;top:858px;width:1px;height:16px;background:#5c5c5c"></div>
<div class="t" style="left:1049.6px;top:858px;font-size:9px;letter-spacing:-0.5px;color:#e6e6e6;line-height:16px">МОДЕЛЬ</div>
<div class="a" style="left:1088.3px;top:858px;width:1px;height:16px;background:#5c5c5c"></div>
<div class="a" style="left:1105.6px;top:858px;width:1px;height:16px;background:#5c5c5c"></div>
<div class="a" style="left:1196.5px;top:858px;width:1px;height:16px;background:#5c5c5c"></div>
<div class="a" style="left:1214.7px;top:858px;width:1px;height:16px;background:#5c5c5c"></div>
<div class="a" style="left:1303px;top:858px;width:1px;height:16px;background:#5c5c5c"></div>
<div class="a" style="left:1400px;top:858px;width:1px;height:16px;background:#5c5c5c"></div>
<div class="a" style="left:1423.5px;top:858px;width:1px;height:16px;background:#5c5c5c"></div>
<div class="a" style="left:1447px;top:858px;width:1px;height:16px;background:#5c5c5c"></div>
<div class="a" style="left:1471px;top:858px;width:1px;height:16px;background:#5c5c5c"></div>
<div class="a" style="left:1494px;top:858px;width:1px;height:16px;background:#5c5c5c"></div>
<div class="a" style="left:1534.5px;top:858px;width:1px;height:16px;background:#5c5c5c"></div>
<div class="a" style="left:1232px;top:857px;width:48px;height:17px;background:#4f6582;border:1px solid #6e8bb1"></div>
<div class="a" style="left:1256px;top:857px;width:1px;height:17px;background:#6e8bb1"></div>
<div class="t" style="left:1325px;top:858px;font-size:9.5px;letter-spacing:-0.2px;color:#ececec;line-height:16px">m1:100</div>
<svg width="1560" height="877" style="left:0;top:0"><rect x="1091" y="866" width="5" height="4" fill="none" stroke="#dcdcdc" stroke-width=".9"/><path d="M1092 866 V864 A1.5 1.5 0 0 1 1095 864" fill="none" stroke="#dcdcdc" stroke-width=".9"/><rect x="1097" y="862" width="5" height="4" fill="none" stroke="#dcdcdc" stroke-width=".9"/><path d="M1098 862 V860.5 A1.5 1.5 0 0 1 1101 860.5" fill="none" stroke="#dcdcdc" stroke-width=".9"/><rect x="1108" y="860" width="10" height="10" fill="#e0e0e0"/><path d="M1111 868 h6 l-3 3.5z" fill="#fff" stroke="#444" stroke-width=".5"/><circle cx="1202" cy="862.5" r="3" fill="#f4eaa0"/><rect x="1200.5" y="865" width="3" height="2.5" fill="#bba"/><path d="M1205 861 H1209 V866 M1199 869 V871 H1203" stroke="#aaa" stroke-width=".8" fill="none"/><path d="M1205 866 V872 L1206.5 870.5 L1207.5 872.5 L1208.5 872 L1207.5 870 L1209.5 870Z" fill="#f0f0f0"/><circle cx="1223" cy="863.5" r="3.7" fill="#e8e8e8"/><rect x="1221.3" y="867" width="3.4" height="3" fill="#aaa"/><circle cx="1246.5" cy="865.5" r="6" fill="none" stroke="#d03040" stroke-width="1.2"/><path d="M1243 860 L1250 871" stroke="#d03040" stroke-width="1.2"/><path d="M1245 861 V869 L1246.5 867.5 L1247.5 869.5 L1248.5 869 L1247.5 867 L1249.5 867Z" fill="#fff"/><path d="M1264 860 V868 L1266 866 L1267.5 869 L1268.5 868.5 L1267.5 865.5 L1270 865.5Z" fill="#f4f4f4"/><rect x="1267" y="866" width="7" height="6" fill="#ddd" stroke="#555" stroke-width=".5"/><path d="M1268 868.5 H1273 M1268 870.5 H1273" stroke="#555" stroke-width=".6"/><path d="M1290 860 V872 H1301 M1290 872 L1294 868" stroke="#dcdcdc" stroke-width=".9" fill="none"/><path d="M1289 861.5 L1290 859.5 L1291 861.5Z" fill="#dcdcdc"/><path d="M1295 865 L1298 860 L1297 863.5 L1299 863.5 L1296 868 L1297 865Z" fill="#dcdcdc"/><path d="M1386 866 L1388 864 L1389 867 V859.5 A1 1 0 0 1 1391 859.5 V858.5 A1 1 0 0 1 1393 858.5 V859.5 A1 1 0 0 1 1395 859.5 V861 A1 1 0 0 1 1396.5 861 V868 C1396.5 871 1394.5 872.5 1392 872.5 C1389 872.5 1387.5 870 1386 866Z" fill="#f4f4f4"/><circle cx="1413" cy="864" r="3.8" fill="#cfe6fa" stroke="#eee" stroke-width=".8"/><path d="M1416 867 L1420 871" stroke="#6fa8e8" stroke-width="1.6"/><rect x="1430.7" y="859" width="13.3" height="13" fill="#6fa8e8"/><circle cx="1436" cy="864.5" r="3" fill="none" stroke="#2a5a9a" stroke-width="1"/><path d="M1438 866.5 L1441 869.5" stroke="#2a5a9a" stroke-width="1.3"/><path d="M1455 870 V859.5 H1466 V862" stroke="#6fa8e8" stroke-width="1" fill="none"/><circle cx="1462" cy="867" r="3" fill="none" stroke="#dcdcdc" stroke-width=".9"/><path d="M1464 869 L1467 872" stroke="#dcdcdc" stroke-width="1.1"/><ellipse cx="1484.5" cy="866" rx="6" ry="3" fill="none" stroke="#bbb" stroke-width=".9"/><path d="M1484.5 859 V872" stroke="#bbb" stroke-width=".9"/><circle cx="1507.5" cy="865.5" r="4.5" fill="none" stroke="#8ed05a" stroke-width="1.8"/><path d="M1502 864 L1504 866.5 L1506 864Z M1513 867 L1511 864.5 L1509 867Z" fill="#8ed05a"/><path d="M1519 868 V859 H1528 V861" stroke="#ccc" stroke-width=".9" fill="none"/><rect x="1524" y="865" width="7" height="6" fill="#ddd"/><path d="M1525 865 V863.5 A2.5 2.5 0 0 1 1530 863.5" stroke="#ccc" fill="none"/><rect x="1545" y="861" width="10" height="9" fill="#1e9ae0"/><path d="M1543 862 V859 H1546 M1554 859 H1557 V862 M1543 869 V872 H1546 M1554 872 H1557 V869" stroke="#ddd" stroke-width=".9" fill="none"/></svg>
</body></html>
